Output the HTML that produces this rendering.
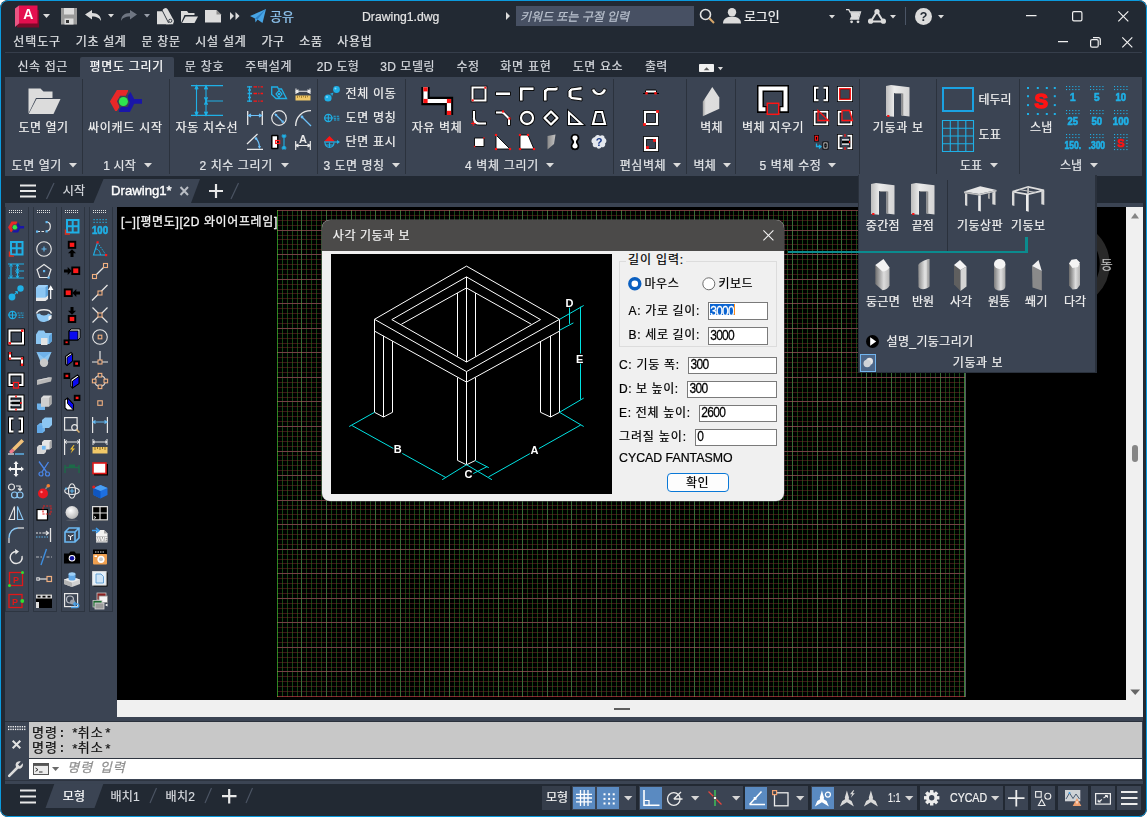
<!DOCTYPE html>
<html lang="ko">
<head>
<meta charset="utf-8">
<title>Drawing1.dwg</title>
<style>
*{box-sizing:border-box;margin:0;padding:0}
html,body{width:1147px;height:817px;overflow:hidden;background:#fff}
body{font-family:"Liberation Sans","Noto Sans CJK KR",sans-serif;font-size:12px;color:#e9e9e9;position:relative}
.abs{position:absolute}
#win{position:absolute;left:0;top:0;width:1147px;height:817px;background:#222933;border-radius:8px;overflow:hidden}
#frame{position:absolute;left:0;top:0;width:1147px;height:817px;border:1.5px solid #0b9ade;border-radius:8px;pointer-events:none}
.t{position:absolute;white-space:pre;line-height:16px;height:16px;color:#f0f0f0;-webkit-text-stroke:.22px currentColor}
svg{position:absolute;overflow:visible;fill:none}
</style>
</head>
<body>
<div id="win">
<!-- TITLE BAR -->
<svg style="left:14px;top:3.5px" width="26" height="24" viewBox="0 0 26 24"><path d="M3 19H25V23.500H3Z" fill="#7d0a2a"/><path d="M21 6H25V20H21Z" fill="#7d0a2a"/><path d="M5 1.500H23.500V19.500H5Z" fill="#e40f4f"/><path d="M1 4.500L5 1.500V19.500L1 23Z" fill="#ea5583"/><text x="14.300" y="15.300" font-size="14" font-weight="700" fill="#fff" text-anchor="middle" font-family="Liberation Sans,sans-serif">A</text></svg><svg style="left:43px;top:14px" width="7" height="4" viewBox="0 0 7 4"><path d="M0 0H7L3.500 4Z" fill="#dcdcdc"/></svg><svg style="left:61px;top:7.5px" width="16" height="17" viewBox="0 0 16 17"><path d="M0 0H16V16.500H0Z" fill="#9a9a9a"/><path d="M3 0H13V6.500H3Z" fill="#dcdcdc"/><path d="M3.500 10.500H12.500V16.500H3.500Z" fill="#dcdcdc"/><path d="M5 12H8V15H5Z" fill="#333"/></svg><svg style="left:85px;top:10px" width="17" height="11" viewBox="0 0 17 11"><path d="M0 4.500L7 0V3C13 3 16 6 16 11C14.500 8 12 6.500 7 6.500V9.500Z" fill="#dcdcdc"/></svg><svg style="left:108px;top:14px" width="6" height="3.5" viewBox="0 0 6 3.5"><path d="M0 0H6L3 3.500Z" fill="#dcdcdc"/></svg><svg style="left:121px;top:10px" width="17" height="11" viewBox="0 0 17 11"><path d="M16 4.500L9 0V3C3 3 0 6 0 11C1.500 8 4 6.500 9 6.500V9.500Z" fill="#6f7682"/></svg><svg style="left:144px;top:14px" width="6" height="3.5" viewBox="0 0 6 3.5"><path d="M0 0H6L3 3.500Z" fill="#9aa0aa"/></svg><svg style="left:157px;top:7.5px" width="17" height="17" viewBox="0 0 17 17"><path d="M0 3.200H6L12.500 16.300H0Z" fill="#dcdcdc"/><path d="M9 11.500H16.200V16.300H9Z" fill="#dcdcdc"/><path d="M8.500 3L14 13.200" stroke="#dcdcdc" stroke-width="5.600" stroke-linecap="round"/><path d="M5.300 2.600L11.600 15" stroke="#222933" stroke-width=".900"/><circle cx="13.300" cy="12.800" r="1.600" stroke="#222933" stroke-width=".900" fill="none"/></svg><svg style="left:181px;top:10px" width="17" height="13" viewBox="0 0 17 13"><path d="M0 13V1H6L7.500 3H13.500V5H3.500L0 13Z" fill="#dcdcdc"/><path d="M4.500 6.500H17L13.500 13H1Z" fill="#dcdcdc"/></svg><svg style="left:205px;top:10px" width="16" height="12.5" viewBox="0 0 16 12.5"><path d="M0 0H11.500L16 4.500V12.500H0Z" fill="#dcdcdc"/><path d="M11.500 0V4.500H16Z" fill="#8c8c8c"/></svg><svg style="left:229.5px;top:12px" width="10" height="8" viewBox="0 0 10 8"><path d="M0 0L4 4L0 8ZM5.500 0L9.500 4L5.500 8Z" fill="#dcdcdc"/></svg><svg style="left:249.5px;top:9px" width="16" height="14" viewBox="0 0 16 14"><path d="M0 7L16 0L12.500 14L7.500 10.500L5.500 13.500L5 9.500Z" fill="#47a5e6"/><path d="M5 9.500L16 0L7.500 10.500" fill="#2d7fc4"/></svg><svg style="left:699px;top:8px" width="16" height="16" viewBox="0 0 16 16"><circle cx="6.500" cy="6.500" r="5" stroke="#e4e4e4" stroke-width="1.600" fill="none"/><path d="M10.300 10.300L15 15" stroke="#d8a76a" stroke-width="2"/></svg><svg style="left:722.5px;top:8px" width="18" height="15.5" viewBox="0 0 18 15.5"><circle cx="9" cy="4.200" r="4.200" fill="#dcdcdc"/><path d="M0 15.500C0 10.500 4 8.800 9 8.800S18 10.500 18 15.500Z" fill="#dcdcdc"/></svg><svg style="left:829px;top:15px" width="6" height="3.5" viewBox="0 0 6 3.5"><path d="M0 0H6L3 3.500Z" fill="#dcdcdc"/></svg><svg style="left:846px;top:9px" width="15" height="14.5" viewBox="0 0 15 14.5"><path d="M0 .700H2.800L4 3H14.500L12.800 8.600H5.200L4.600 10H13.300" stroke="#dcdcdc" stroke-width="1.300" fill="none"/><path d="M4.200 3.300H14L12.500 8.300H5.400Z" fill="#dcdcdc"/><circle cx="5.600" cy="12.800" r="1.400" fill="#dcdcdc"/><circle cx="12" cy="12.800" r="1.400" fill="#dcdcdc"/></svg><svg style="left:867.5px;top:9px" width="18" height="15" viewBox="0 0 18 15"><path d="M9 2.500L2.800 12.500H15.200Z" stroke="#dcdcdc" stroke-width="2" fill="none"/><circle cx="9" cy="2.600" r="2.600" fill="#dcdcdc"/><circle cx="2.600" cy="12.200" r="2.600" fill="#dcdcdc"/><circle cx="15.400" cy="12.200" r="2.600" fill="#dcdcdc"/></svg><svg style="left:890px;top:15px" width="6" height="3.5" viewBox="0 0 6 3.5"><path d="M0 0H6L3 3.500Z" fill="#dcdcdc"/></svg><div class="abs" style="left:905px;top:7px;width:1px;height:18px;background:#4b5566;"></div><svg style="left:914.5px;top:8px" width="17" height="17" viewBox="0 0 17 17"><circle cx="8.500" cy="8.500" r="8.500" fill="#dcdcdc"/><text x="8.500" y="13" font-size="12.500" font-weight="700" fill="#222933" text-anchor="middle" font-family="Liberation Sans,sans-serif">?</text></svg><svg style="left:938px;top:15px" width="6" height="3.5" viewBox="0 0 6 3.5"><path d="M0 0H6L3 3.500Z" fill="#dcdcdc"/></svg><svg style="left:1026px;top:15px" width="11" height="2" viewBox="0 0 11 2"><path d="M0 .700H10.500" stroke="#f0f0f0" stroke-width="1.200"/></svg><svg style="left:1072px;top:11px" width="11" height="11" viewBox="0 0 11 11"><rect x=".600" y=".600" width="9.300" height="9.300" rx="1.300" stroke="#f0f0f0" stroke-width="1.200" fill="none"/></svg><svg style="left:1118px;top:11px" width="11" height="11" viewBox="0 0 11 11"><path d="M.300 .300L10.300 10.300M10.300 .300L.300 10.300" stroke="#f0f0f0" stroke-width="1.200"/></svg><svg style="left:1058px;top:41px" width="11" height="2" viewBox="0 0 11 2"><path d="M0 .600H10" stroke="#f0f0f0" stroke-width="1.200"/></svg><svg style="left:1089.5px;top:37px" width="11" height="11" viewBox="0 0 11 11"><rect x=".600" y="2.600" width="7.600" height="7.600" rx="1.500" stroke="#f0f0f0" stroke-width="1.200" fill="none"/><path d="M3 .600H8.500A1.800 1.800 0 0 1 10.300 2.400V8" stroke="#f0f0f0" stroke-width="1.200" fill="none"/></svg><svg style="left:1122px;top:37px" width="11" height="11" viewBox="0 0 11 11"><path d="M.300 .300L10.300 10.300M10.300 .300L.300 10.300" stroke="#f0f0f0" stroke-width="1.200"/></svg>
<span class="t" style="left:270.0px;top:8.6px;font-size:13px;color:#8fc5f0;letter-spacing:0.04px;">공유</span>
<span class="t" style="left:361.6px;top:8.6px;font-size:13.5px;color:#e4e4e4;transform:scaleX(0.905);transform-origin:0 50%;">Drawing1.dwg</span>
<svg style="left:506px;top:12px" width="4" height="8" viewBox="0 0 4 8"><path d="M0 0L4 4L0 8Z" fill="#dcdcdc"/></svg>
<div class="abs" style="left:516px;top:6px;width:178px;height:20px;background:#48516280;background:#475063"></div>
<span class="t" style="left:520.0px;top:8.6px;color:#b9c1cd;font-style:italic;letter-spacing:-0.03px;">키워드 또는 구절 입력</span>
<span class="t" style="left:744.0px;top:8.6px;font-size:13px;letter-spacing:-0.13px;">로그인</span>
<!-- MENU BAR -->
<span class="t" style="left:13.3px;top:34.0px;color:#dfe1e4;letter-spacing:0.88px;">선택도구</span>
<span class="t" style="left:75.7px;top:34.0px;color:#dfe1e4;letter-spacing:0.68px;">기초 설계</span>
<span class="t" style="left:141.6px;top:34.0px;color:#dfe1e4;letter-spacing:0.63px;">문 창문</span>
<span class="t" style="left:195.3px;top:34.0px;color:#dfe1e4;letter-spacing:0.76px;">시설 설계</span>
<span class="t" style="left:261.6px;top:34.0px;color:#dfe1e4;letter-spacing:0.25px;">가구</span>
<span class="t" style="left:299.2px;top:34.0px;color:#dfe1e4;letter-spacing:0.65px;">소품</span>
<span class="t" style="left:337.2px;top:34.0px;color:#dfe1e4;letter-spacing:0.69px;">사용법</span>
<div class="abs" style="left:5px;top:52px;width:1137px;height:1px;background:#363e4b;"></div>
<!-- RIBBON TABS -->
<div class="abs" style="left:80px;top:57px;width:94px;height:21px;background:#3b4453;border-radius:2px 2px 0 0"></div>
<span class="t" style="left:17.4px;top:58.6px;color:#d6d9de;letter-spacing:0.62px;">신속 접근</span>
<span class="t" style="left:89.6px;top:58.6px;color:#ffffff;letter-spacing:0.67px;">평면도 그리기</span>
<span class="t" style="left:184.8px;top:58.6px;color:#d6d9de;letter-spacing:0.73px;">문 창호</span>
<span class="t" style="left:245.2px;top:58.6px;color:#d6d9de;letter-spacing:0.71px;">주택설계</span>
<span class="t" style="left:316.7px;top:58.6px;color:#d6d9de;letter-spacing:0.35px;">2D 도형</span>
<span class="t" style="left:380.2px;top:58.6px;color:#d6d9de;letter-spacing:0.5px;">3D 모델링</span>
<span class="t" style="left:456.6px;top:58.6px;color:#d6d9de;letter-spacing:0.45px;">수정</span>
<span class="t" style="left:500.2px;top:58.6px;color:#d6d9de;letter-spacing:0.76px;">화면 표현</span>
<span class="t" style="left:572.7px;top:58.6px;color:#d6d9de;letter-spacing:0.62px;">도면 요소</span>
<span class="t" style="left:644.9px;top:58.6px;color:#d6d9de;letter-spacing:0.3px;">출력</span>
<svg style="left:699px;top:63.900px" width="24" height="8" viewBox="0 0 24 8"><rect x="0" y="0" width="15" height="8.100" rx=".800" fill="#f0f0f0"/><path d="M4.800 6.200L7.600 3.300L10.400 6.200Z" fill="#5a5a5a"/><path d="M18.900 3.100H24L21.450 6.300Z" fill="#dcdcdc"/></svg>
<!-- RIBBON -->
<div class="abs" style="left:5px;top:77px;width:1137.2px;height:98.7px;background:#3b4453;"></div>
<div class="abs" style="left:82px;top:79px;width:1px;height:95px;background:#2b323d;"></div>
<div class="abs" style="left:169px;top:79px;width:1px;height:95px;background:#2b323d;"></div>
<div class="abs" style="left:317px;top:79px;width:1px;height:95px;background:#2b323d;"></div>
<div class="abs" style="left:405px;top:79px;width:1px;height:95px;background:#2b323d;"></div>
<div class="abs" style="left:613px;top:79px;width:1px;height:95px;background:#2b323d;"></div>
<div class="abs" style="left:686px;top:79px;width:1px;height:95px;background:#2b323d;"></div>
<div class="abs" style="left:735px;top:79px;width:1px;height:95px;background:#2b323d;"></div>
<div class="abs" style="left:859px;top:79px;width:1px;height:95px;background:#2b323d;"></div>
<div class="abs" style="left:936px;top:79px;width:1px;height:95px;background:#2b323d;"></div>
<div class="abs" style="left:1019px;top:79px;width:1px;height:95px;background:#2b323d;"></div>
<svg style="left:27.5px;top:87.5px" width="33" height="27" viewBox="0 0 33 27"><path d="M.500 .500H12.500L15.500 3.500H24.500V10H8L.500 25.500Z" fill="#dcdcdc"/><path d="M8.500 11H32.500L25.500 26H.700Z" fill="#dcdcdc"/></svg><svg style="left:104px;top:84px" width="44" height="32" viewBox="0 0 44 32"><path d="M12.900 5.900H24.100V7.300L21.800 11.800H16.100L12.900 17.300L15.100 22V23.500L12.900 27H11.200L5.900 17.500Z" fill="#e82828"/><path d="M26.500 8L30.200 14.900H38V19.800H30.200L25.900 28H15.100V26.300L16.900 23.100H23.500L25.900 18.400L23.900 14.900V11.400Z" fill="#1a16a8"/><circle cx="19.400" cy="17.450" r="4.500" fill="#2ee64e"/></svg><svg style="left:191px;top:85px" width="32" height="31" viewBox="0 0 32 31"><path d="M0 .600H32M0 30.400H32M14.500 16H32M5.500 .600V30.400M15 .600V30.400" stroke="#1fb0e6" stroke-width="1.100"/><path d="M3.9 4.2L5.5 0.6L7.1 4.2M3.9 26.799999999999997L5.5 30.4L7.1 26.799999999999997M13.4 4.2L15 0.6L16.6 4.2M13.4 12.4L15 16L16.6 12.4M13.4 19.6L15 16L16.6 19.6M13.4 26.799999999999997L15 30.4L16.6 26.799999999999997" stroke="#1fb0e6" stroke-width="1.100" fill="#1fb0e6"/></svg><svg style="left:247px;top:86px" width="16" height="16" viewBox="0 0 16 16"><path d="M2.500 0V16M0 .800H5M0 15.200H5M.500 7.500H5M1 4H4M1 11.500H4" stroke="#1fb0e6" stroke-width="1.300"/><path d="M6.500 .800H16M6.500 7.500H16M6.500 15.200H16" stroke="#ff1414" stroke-width="1.300" stroke-dasharray="3.500 1.200 1.200 1.200"/></svg><svg style="left:271px;top:86px" width="16" height="16" viewBox="0 0 16 16"><path d="M.700 1H6.500L7.500 3H10.500L15.500 12.500H5L.700 8.500Z" stroke="#1fb0e6" stroke-width="1.300" fill="none"/><path d="M8 4.500L11 8L8 11.500L5 8Z" stroke="#1fb0e6" stroke-width="1.200" fill="none"/><rect x="7" y="7" width="2" height="2" fill="#1fb0e6"/></svg><svg style="left:295.3px;top:86px" width="16" height="16" viewBox="0 0 16 16"><path d="M1 2.500V8M15 2.500V8M1 5.200H15M3.500 3.800L1 5.200L3.500 6.600M12.500 3.800L15 5.200L12.500 6.600" stroke="#e8e8e8" stroke-width="1.100" fill="none"/><rect x=".500" y="9.500" width="15" height="5" fill="#f0c868"/><path d="M2.500 9.500V12M4.500 9.500V11.300M6.500 9.500V12M8.500 9.500V11.300M10.500 9.500V12M12.500 9.500V11.300" stroke="#8a6a20" stroke-width=".700"/></svg><svg style="left:247px;top:110px" width="16" height="16" viewBox="0 0 16 16"><path d="M.700 1V15M15.300 1V15" stroke="#e8e8e8" stroke-width="1.300"/><path d="M1.500 5.500H14.500M4 4L1.500 5.500L4 7M12 4L14.500 5.500L12 7" stroke="#6cc0f8" stroke-width="1.200" fill="#6cc0f8"/></svg><svg style="left:271px;top:110px" width="16" height="16" viewBox="0 0 16 16"><circle cx="8" cy="8" r="7.300" stroke="#e8e8e8" stroke-width="1.200" fill="none"/><path d="M4 4L12.500 12.500" stroke="#6cc0f8" stroke-width="1.200"/><path d="M3.500 3.500L6.500 4.300L4.300 6.500ZM13 13L10 12.200L12.200 10Z" fill="#6cc0f8"/></svg><svg style="left:295.3px;top:110px" width="16" height="16" viewBox="0 0 16 16"><path d="M.700 16C.700 7 7 .700 16 .700" stroke="#e8e8e8" stroke-width="1.300" fill="none"/><path d="M7 7L16 16" stroke="#6cc0f8" stroke-width="1.200"/><circle cx="7" cy="7" r="1.400" fill="#6cc0f8"/></svg><svg style="left:247px;top:134px" width="16" height="16" viewBox="0 0 16 16"><path d="M0 15.300H16M0 10L10.500 0" stroke="#e8e8e8" stroke-width="1.300"/><path d="M9 4.500C11.500 7 12.500 10 12.500 14" stroke="#6cc0f8" stroke-width="1.200" fill="none"/><circle cx="9" cy="4.500" r="1.300" fill="#6cc0f8"/><path d="M12.500 15L11 12H14Z" fill="#6cc0f8"/></svg><svg style="left:271px;top:134px" width="16" height="16" viewBox="0 0 16 16"><rect x=".800" y="1.500" width="6" height="13" rx=".500" fill="#fff" stroke="#000" stroke-width="1.500"/><rect x="4.700" y="6.500" width="4" height="3" stroke="#ff1414" stroke-width="1.200" fill="none"/><path d="M13 1V15M10.500 2H15.500M10.500 14H15.500M11.500 .500L14.500 3.500M14.500 .500L11.500 3.500M11.500 12.500L14.500 15.500M14.500 12.500L11.500 15.500" stroke="#1fb0e6" stroke-width="1.100"/></svg><svg style="left:295.3px;top:134px" width="16" height="16" viewBox="0 0 16 16"><path d="M.700 7V16M15.300 7V16M1 11.500H15M3.500 10L1 11.500L3.500 13M12.500 10L15 11.500L12.500 13" stroke="#e8e8e8" stroke-width="1.200" fill="none"/><text x="8" y="8.500" font-size="11" font-weight="700" fill="#e8e8e8" text-anchor="middle" font-family="Liberation Sans,sans-serif">A</text></svg><svg style="left:324px;top:85.5px" width="16" height="16" viewBox="0 0 16 16"><circle cx="4" cy="12" r="3.600" fill="#1fb0e6"/><circle cx="12.500" cy="3.500" r="3.400" fill="#1fb0e6"/><circle cx="3" cy="11" r="1" fill="#7fd8ff"/><circle cx="11.500" cy="2.500" r="1" fill="#7fd8ff"/><path d="M5.500 8L9.500 6.500L8 10.500L7.500 8.500Z" fill="#1fb0e6"/></svg><svg style="left:324px;top:109.5px" width="16" height="16" viewBox="0 0 16 16"><circle cx="4.300" cy="8" r="3.600" stroke="#1fb0e6" stroke-width="1.300" fill="none"/><path d="M0 8H9.500M4.300 4.400V11.600" stroke="#1fb0e6" stroke-width="1.100"/><path d="M9.500 6.300H16M10 8.200H16M10 10H16" stroke="#1fb0e6" stroke-width="1.100" stroke-dasharray="2.200 1"/></svg><svg style="left:324px;top:133.5px" width="16" height="16" viewBox="0 0 16 16"><path d="M5.500 2L11 7.500H0Z" fill="#ff1414"/><path d="M0 8H15" stroke="#1fb0e6" stroke-width="1.200"/><path d="M16 8L13 6V10Z" fill="#1fb0e6"/><path d="M1 8.500C1 15 10 15 10 8.500M5.500 8.500V13.500M2 11H9" stroke="#1fb0e6" stroke-width="1.200" fill="none"/></svg><svg style="left:421px;top:85px" width="32" height="32" viewBox="0 0 32 32"><path d="M4.500 2V16H28V30" stroke="#000" stroke-width="8.300" fill="none"/><path d="M4.500 2V16H28V30" stroke="#fff" stroke-width="4.200" fill="none"/><rect x="2.4" y="2.2" width="4.200" height="4.200" fill="#ff1414"/><rect x="2.4" y="13.9" width="4.200" height="4.200" fill="#ff1414"/><rect x="25.9" y="13.9" width="4.200" height="4.200" fill="#ff1414"/><rect x="25.9" y="25.8" width="4.200" height="4.200" fill="#ff1414"/></svg><svg style="left:471px;top:86px" width="16" height="16" viewBox="0 0 16 16"><rect x="1.500" y="1.500" width="13" height="13" stroke="#000" stroke-width="3.600" fill="none"/><rect x="1.500" y="1.500" width="13" height="13" stroke="#fff" stroke-width="2" fill="none"/><rect x="13.3" y="0.7" width="2" height="2" fill="#ff1414"/><rect x="0.7" y="13.3" width="2" height="2" fill="#ff1414"/></svg><svg style="left:495px;top:86px" width="16" height="16" viewBox="0 0 16 16"><path d="M.500 6H15.500V9.500H.500Z" fill="#fff" stroke="#000" stroke-width="0.9"/></svg><svg style="left:519px;top:86px" width="16" height="16" viewBox="0 0 16 16"><path d="M.500 1H15V4.500H4V15H.500Z" fill="#fff" stroke="#000" stroke-width="0.9"/></svg><svg style="left:543px;top:86px" width="16" height="16" viewBox="0 0 16 16"><path d="M.500 4L4.500 1.500H12.500L15 .500V4L13 5H5L4 5.700V15H.500Z" fill="#fff" stroke="#000" stroke-width="0.9"/></svg><svg style="left:567px;top:86px" width="16" height="16" viewBox="0 0 16 16"><path d="M15 .500V4L5 5V10.500L15 11.500V15L4 13.500L1 10.500V5L4 2Z" fill="#fff" stroke="#000" stroke-width="0.9"/></svg><svg style="left:591px;top:86px" width="16" height="16" viewBox="0 0 16 16"><path d="M.500 3.500L3.500 2.500C5 8 11 8 12.500 2.500L15.500 3.500C14 11.500 2 11.500 .500 3.500Z" fill="#fff" stroke="#000" stroke-width="0.9"/></svg><svg style="left:471px;top:110px" width="16" height="16" viewBox="0 0 16 16"><path d="M1.500 .500H4.500V8C4.500 10.500 6 12 8.500 12H15.500V15H8C4 15 1.500 12.500 1.500 8.500Z" fill="#fff" stroke="#000" stroke-width="0.9"/><path d="M0 13.500H4.500M2.200 11.300V15.800" stroke="#ff1414" stroke-width="1"/></svg><svg style="left:495px;top:110px" width="16" height="16" viewBox="0 0 16 16"><path d="M.500 1H8.500L15.500 8V15.500H12.500V9L7.500 4H.500Z" fill="#fff" stroke="#000" stroke-width="0.9"/><rect x="6.9" y="0.4" width="2.2" height="2.2" fill="#ff1414"/><rect x="13.4" y="7.4" width="2.2" height="2.2" fill="#ff1414"/></svg><svg style="left:519px;top:110px" width="16" height="16" viewBox="0 0 16 16"><circle cx="8" cy="8" r="6" stroke="#000" stroke-width="4" fill="none"/><circle cx="8" cy="8" r="6" stroke="#fff" stroke-width="2.300" fill="none"/></svg><svg style="left:543px;top:110px" width="16" height="16" viewBox="0 0 16 16"><path d="M8 1.500L14.500 8L8 14.500L1.500 8Z" stroke="#000" stroke-width="4" fill="none" stroke-linejoin="round"/><path d="M8 1.500L14.500 8L8 14.500L1.500 8Z" stroke="#fff" stroke-width="2.300" fill="none" stroke-linejoin="round"/></svg><svg style="left:567px;top:110px" width="16" height="16" viewBox="0 0 16 16"><path d="M2 2.500V14H14.500Z" stroke="#000" stroke-width="3.600" fill="none"/><path d="M2 2.500V14H14.500Z" stroke="#fff" stroke-width="2" fill="none"/></svg><svg style="left:591px;top:110px" width="16" height="16" viewBox="0 0 16 16"><path d="M5 2H11L14 14H2Z" stroke="#000" stroke-width="3.800" fill="none"/><path d="M5 2H11L14 14H2Z" stroke="#fff" stroke-width="2.200" fill="none"/></svg><svg style="left:471px;top:134px" width="16" height="16" viewBox="0 0 16 16"><path d="M3.500 4H13V12.500H3.500Z" fill="#fff" stroke="#000" stroke-width="0.9"/><rect x="12.1" y="3.3" width="1.4" height="1.4" fill="#ff1414"/><rect x="2.9" y="11.8" width="1.4" height="1.4" fill="#ff1414"/></svg><svg style="left:495px;top:134px" width="16" height="16" viewBox="0 0 16 16"><path d="M1 1L15 15H1Z" fill="#fff" stroke="#000" stroke-width="0.9"/><rect x="-0.1" y="-0.1" width="2.2" height="2.2" fill="#ff1414"/><rect x="-0.1" y="13.9" width="2.2" height="2.2" fill="#ff1414"/><rect x="13.9" y="13.9" width="2.2" height="2.2" fill="#ff1414"/></svg><svg style="left:519px;top:134px" width="16" height="16" viewBox="0 0 16 16"><path d="M1 1H9L15 15H1Z" fill="#fff" stroke="#000" stroke-width="0.9"/><rect x="-0.1" y="-0.1" width="2.2" height="2.2" fill="#ff1414"/><rect x="7.9" y="-0.1" width="2.2" height="2.2" fill="#ff1414"/><rect x="-0.1" y="13.9" width="2.2" height="2.2" fill="#ff1414"/><rect x="13.9" y="13.9" width="2.2" height="2.2" fill="#ff1414"/></svg><svg style="left:543px;top:134px" width="16" height="16" viewBox="0 0 16 16"><defs><linearGradient id="slab" x1="0" x2="1"><stop offset="0" stop-color="#8a8a8a"/><stop offset="1" stop-color="#c4c4c4"/></linearGradient></defs><path d="M4.500 2L12.500 .500L11 10L4.500 15.500Z" fill="url(#slab)"/></svg><svg style="left:567px;top:134px" width="16" height="16" viewBox="0 0 16 16"><path d="M8 .700C11.500 .700 12.500 4 10.500 6.500C9.500 7.500 9.500 8.500 10.500 9.500C12.500 12 11.500 15.300 8 15.300C4.500 15.300 3.500 12 5.500 9.500C6.500 8.500 6.500 7.500 5.500 6.500C3.500 4 4.500 .700 8 .700Z" fill="#fff" stroke="#000" stroke-width="1.800"/></svg><svg style="left:591px;top:134px" width="16" height="16" viewBox="0 0 16 16"><path d="M4 3C5 .500 8 .500 9 2C11 .500 14 1.500 13.500 4C16 5 16 8.500 14 9.500C15 12 12.500 14 10.500 13C9 15.500 6 15 5.500 13C2.500 14 1 11.500 2 9.500C-.500 8.500 0 4 4 3Z" fill="#e4e8ee"/><text x="8" y="12" font-size="11" font-weight="700" fill="#1a3a8a" text-anchor="middle" font-family="Liberation Sans,sans-serif">?</text></svg><svg style="left:643px;top:85px" width="16" height="16" viewBox="0 0 16 16"><path d="M0 8.500H16" stroke="#000" stroke-width="1"/><rect x="2.500" y="5" width="11" height="3" rx="1" fill="#fff" stroke="#000" stroke-width="1"/><rect x="2.3" y="7.1" width="2.4" height="2.4" fill="#ff1414"/><rect x="11.3" y="7.1" width="2.4" height="2.4" fill="#ff1414"/></svg><svg style="left:643px;top:109.5px" width="16" height="16" viewBox="0 0 16 16"><rect x="2" y="2" width="12" height="12" stroke="#000" stroke-width="3.800" fill="none"/><rect x="2" y="2" width="12" height="12" stroke="#fff" stroke-width="2.200" fill="none"/><rect x="13.1" y="0.1" width="2.8" height="2.8" fill="#ff1414"/><rect x="0.1" y="13.1" width="2.8" height="2.8" fill="#ff1414"/></svg><svg style="left:643px;top:135.5px" width="16" height="16" viewBox="0 0 16 16"><rect x="2" y="2" width="12" height="12" stroke="#000" stroke-width="3.800" fill="none"/><rect x="2" y="2" width="12" height="12" stroke="#fff" stroke-width="2.200" fill="none"/><rect x="10.1" y="3.1" width="2.8" height="2.8" fill="#ff1414"/><rect x="3.1" y="10.1" width="2.8" height="2.8" fill="#ff1414"/></svg><svg style="left:701.5px;top:86.5px" width="18" height="30" viewBox="0 0 18 30"><defs><linearGradient id="wl" x1="0" x2="1"><stop offset="0" stop-color="#a0a0a0"/><stop offset=".18" stop-color="#dedede"/><stop offset="1" stop-color="#dcdcdc"/></linearGradient></defs><path d="M10.300 0L17.300 10.500V21.800L.800 29.200V14.800Z" fill="url(#wl)"/></svg><svg style="left:757px;top:85px" width="32" height="30" viewBox="0 0 32 30"><path d="M8 24.500H3.500V3.500H28.500V24.500H24" stroke="#000" stroke-width="7" fill="none" stroke-linecap="square"/><path d="M8.500 24.200H3.500V3.500H28.500V24.200H23.500" stroke="#fff" stroke-width="4" fill="none"/><rect x="10.300" y="18.300" width="11.400" height="11" stroke="#ff1414" stroke-width="1.500" fill="#3b4453"/></svg><svg style="left:813px;top:86px" width="16" height="16" viewBox="0 0 16 16"><path d="M5.500 1.700H2V14.300H5.500M10.500 1.700H14V14.300H10.500" stroke="#000" stroke-width="3.8" fill="none"/><path d="M5.500 1.700H2V14.300H5.500M10.500 1.700H14V14.300H10.500" stroke="#fff" stroke-width="2" fill="none"/></svg><svg style="left:837.2px;top:86px" width="16" height="16" viewBox="0 0 16 16"><rect x="1.700" y="1.700" width="12.600" height="12.600" stroke="#000" stroke-width="3.400" fill="none"/><rect x="1.700" y="1.700" width="12.600" height="12.600" stroke="#fff" stroke-width="1.800" fill="none"/><rect x="2.700" y="2.700" width="10.600" height="10.600" stroke="#ff1414" stroke-width="1.300" fill="none"/></svg><svg style="left:813px;top:110px" width="16" height="16" viewBox="0 0 16 16"><rect x="1.700" y="1.700" width="12.600" height="12.600" stroke="#000" stroke-width="3.400" fill="none"/><rect x="1.700" y="1.700" width="12.600" height="12.600" stroke="#fff" stroke-width="1.800" fill="none"/><path d="M5 .500L15.500 10.500H5Z" stroke="#ff1414" stroke-width="1.300" fill="#3b4453"/></svg><svg style="left:837.2px;top:110px" width="16" height="16" viewBox="0 0 16 16"><rect x="1.700" y="1.700" width="12.600" height="12.600" stroke="#000" stroke-width="3.400" fill="none"/><rect x="1.700" y="1.700" width="12.600" height="12.600" stroke="#fff" stroke-width="1.800" fill="none"/><path d="M5 .500H12.500L15.500 10.500H5Z" stroke="#ff1414" stroke-width="1.300" fill="#3b4453"/></svg><svg style="left:813px;top:134px" width="16" height="16" viewBox="0 0 16 16"><rect x="1" y="1" width="5" height="6.500" fill="#000"/><rect x="2.300" y="2.300" width="2.400" height="3.900" stroke="#ff1414" stroke-width="1.200" fill="none"/><rect x="10" y="8" width="5" height="7" fill="#fff" stroke="#000" stroke-width="1"/><rect x="11.700" y="9.700" width="1.600" height="3.600" stroke="#000" stroke-width=".800" fill="#3b4453"/><path d="M3.500 9.500V12.500H7.500M6 11L8 12.500L6 14.500" stroke="#1fb0e6" stroke-width="1.300" fill="none"/></svg><svg style="left:837.2px;top:134px" width="16" height="16" viewBox="0 0 16 16"><rect x="1.700" y="1.700" width="12.600" height="12.600" stroke="#000" stroke-width="3.400" fill="none"/><rect x="1.700" y="1.700" width="12.600" height="12.600" stroke="#fff" stroke-width="1.800" fill="none"/><rect x="5.500" y="0" width="5" height="16" fill="#3b4453"/><path d="M5 6H12M5 10H12" stroke="#fff" stroke-width="1.500"/><rect x="5" y="6.700" width="7" height="2.600" fill="#000"/><path d="M8 0V3M8 13V16M12.500 7V9" stroke="#ff1414" stroke-width="1.200"/></svg><svg style="left:885.7px;top:85px" width="24" height="32" viewBox="0 0 24 32"><defs><linearGradient id="pgb" x1="0" x2="1" y1="0" y2="0"><stop offset="0" stop-color="#bdbdbd"/><stop offset=".35" stop-color="#ececec"/><stop offset="1" stop-color="#d4d4d4"/></linearGradient></defs><path d="M0 1L5 0L23.500 2.200V31.500L15.500 30.500V8H8V31.800L0 31Z" fill="url(#pgb)"/><path d="M15.500 8L17.300 8.800V30.700L15.500 30.500Z" fill="#8f8f8f"/><path d="M8 8H15.500L17.300 8.800H9.500Z" fill="#a8a8a8"/><rect x="1.200" y="30" width="2.200" height="2" fill="#ff1010"/></svg><div class="abs" style="left:942px;top:86.500px;width:32px;height:25px;border:2px solid #1ba2e2"></div><svg style="left:942px;top:120px" width="32" height="32" viewBox="0 0 32 32"><path d="M.500 .500H31.500V31.500H.500ZM8.300 .500V31.500M16 .500V31.500M23.800 .500V31.500M.500 8.300H31.500M.500 16H31.500M.500 23.800H31.500" stroke="#1fb0e6" stroke-width="1.100" fill="none"/></svg><svg style="left:1027.2px;top:86.8px" width="29" height="28" viewBox="0 0 29 28"><g fill="#1fb0e6"><rect x="0" y="0" width="2" height="2"/><rect x="9.8" y="0" width="2" height="2"/><rect x="18.8" y="0" width="2" height="2"/><rect x="26.8" y="0" width="2" height="2"/><rect x="0" y="8.2" width="2" height="2"/><rect x="26.8" y="8.2" width="2" height="2"/><rect x="0" y="17.1" width="2" height="2"/><rect x="26.8" y="17.1" width="2" height="2"/><rect x="0" y="26" width="2" height="2"/><rect x="9.8" y="26" width="2" height="2"/><rect x="18.8" y="26" width="2" height="2"/><rect x="26.8" y="26" width="2" height="2"/></g><text x="14.200" y="21.300" font-size="21" font-weight="700" fill="#ff1414" stroke="#ff1414" stroke-width="1.500" text-anchor="middle" font-family="Liberation Sans,sans-serif" textLength="13.500" lengthAdjust="spacingAndGlyphs">S</text></svg><svg style="left:1065.5px;top:86.4px" width="14" height="16" viewBox="0 0 14 16"><g fill="#1fb0e6"><rect x="0.0" y="0" width="1.100" height="1.100"/><rect x="0.0" y="3" width="1.100" height="1.100"/><rect x="3.1" y="0" width="1.100" height="1.100"/><rect x="3.1" y="3" width="1.100" height="1.100"/><rect x="6.2" y="0" width="1.100" height="1.100"/><rect x="6.2" y="3" width="1.100" height="1.100"/><rect x="9.3" y="0" width="1.100" height="1.100"/><rect x="9.3" y="3" width="1.100" height="1.100"/><rect x="12.4" y="0" width="1.100" height="1.100"/><rect x="12.4" y="3" width="1.100" height="1.100"/></g><text x="6.800" y="15" font-size="10" font-weight="700" fill="#1fb0e6" stroke="#1fb0e6" stroke-width=".600" text-anchor="middle" font-family="Liberation Sans,sans-serif">1</text></svg><svg style="left:1089.9px;top:86.4px" width="14" height="16" viewBox="0 0 14 16"><g fill="#1fb0e6"><rect x="0.0" y="0" width="1.100" height="1.100"/><rect x="0.0" y="3" width="1.100" height="1.100"/><rect x="3.1" y="0" width="1.100" height="1.100"/><rect x="3.1" y="3" width="1.100" height="1.100"/><rect x="6.2" y="0" width="1.100" height="1.100"/><rect x="6.2" y="3" width="1.100" height="1.100"/><rect x="9.3" y="0" width="1.100" height="1.100"/><rect x="9.3" y="3" width="1.100" height="1.100"/><rect x="12.4" y="0" width="1.100" height="1.100"/><rect x="12.4" y="3" width="1.100" height="1.100"/></g><text x="6.800" y="15" font-size="10" font-weight="700" fill="#1fb0e6" stroke="#1fb0e6" stroke-width=".600" text-anchor="middle" font-family="Liberation Sans,sans-serif">5</text></svg><svg style="left:1113.8px;top:86.4px" width="14" height="16" viewBox="0 0 14 16"><g fill="#1fb0e6"><rect x="0.0" y="0" width="1.100" height="1.100"/><rect x="0.0" y="3" width="1.100" height="1.100"/><rect x="3.1" y="0" width="1.100" height="1.100"/><rect x="3.1" y="3" width="1.100" height="1.100"/><rect x="6.2" y="0" width="1.100" height="1.100"/><rect x="6.2" y="3" width="1.100" height="1.100"/><rect x="9.3" y="0" width="1.100" height="1.100"/><rect x="9.3" y="3" width="1.100" height="1.100"/><rect x="12.4" y="0" width="1.100" height="1.100"/><rect x="12.4" y="3" width="1.100" height="1.100"/></g><text x="6.800" y="15" font-size="10" font-weight="700" fill="#1fb0e6" stroke="#1fb0e6" stroke-width=".600" text-anchor="middle" font-family="Liberation Sans,sans-serif" textLength="10.500" lengthAdjust="spacingAndGlyphs">10</text></svg><svg style="left:1065.5px;top:110.4px" width="14" height="16" viewBox="0 0 14 16"><g fill="#1fb0e6"><rect x="0.0" y="0" width="1.100" height="1.100"/><rect x="0.0" y="3" width="1.100" height="1.100"/><rect x="3.1" y="0" width="1.100" height="1.100"/><rect x="3.1" y="3" width="1.100" height="1.100"/><rect x="6.2" y="0" width="1.100" height="1.100"/><rect x="6.2" y="3" width="1.100" height="1.100"/><rect x="9.3" y="0" width="1.100" height="1.100"/><rect x="9.3" y="3" width="1.100" height="1.100"/><rect x="12.4" y="0" width="1.100" height="1.100"/><rect x="12.4" y="3" width="1.100" height="1.100"/></g><text x="6.800" y="15" font-size="10" font-weight="700" fill="#1fb0e6" stroke="#1fb0e6" stroke-width=".600" text-anchor="middle" font-family="Liberation Sans,sans-serif" textLength="10.500" lengthAdjust="spacingAndGlyphs">25</text></svg><svg style="left:1089.9px;top:110.4px" width="14" height="16" viewBox="0 0 14 16"><g fill="#1fb0e6"><rect x="0.0" y="0" width="1.100" height="1.100"/><rect x="0.0" y="3" width="1.100" height="1.100"/><rect x="3.1" y="0" width="1.100" height="1.100"/><rect x="3.1" y="3" width="1.100" height="1.100"/><rect x="6.2" y="0" width="1.100" height="1.100"/><rect x="6.2" y="3" width="1.100" height="1.100"/><rect x="9.3" y="0" width="1.100" height="1.100"/><rect x="9.3" y="3" width="1.100" height="1.100"/><rect x="12.4" y="0" width="1.100" height="1.100"/><rect x="12.4" y="3" width="1.100" height="1.100"/></g><text x="6.800" y="15" font-size="10" font-weight="700" fill="#1fb0e6" stroke="#1fb0e6" stroke-width=".600" text-anchor="middle" font-family="Liberation Sans,sans-serif" textLength="10.500" lengthAdjust="spacingAndGlyphs">50</text></svg><svg style="left:1113.8px;top:110.4px" width="14" height="16" viewBox="0 0 14 16"><g fill="#1fb0e6"><rect x="0.0" y="0" width="1.100" height="1.100"/><rect x="0.0" y="3" width="1.100" height="1.100"/><rect x="3.1" y="0" width="1.100" height="1.100"/><rect x="3.1" y="3" width="1.100" height="1.100"/><rect x="6.2" y="0" width="1.100" height="1.100"/><rect x="6.2" y="3" width="1.100" height="1.100"/><rect x="9.3" y="0" width="1.100" height="1.100"/><rect x="9.3" y="3" width="1.100" height="1.100"/><rect x="12.4" y="0" width="1.100" height="1.100"/><rect x="12.4" y="3" width="1.100" height="1.100"/></g><text x="6.800" y="15" font-size="10" font-weight="700" fill="#1fb0e6" stroke="#1fb0e6" stroke-width=".600" text-anchor="middle" font-family="Liberation Sans,sans-serif" textLength="16" lengthAdjust="spacingAndGlyphs">100</text></svg><svg style="left:1065.5px;top:134.4px" width="14" height="16" viewBox="0 0 14 16"><g fill="#1fb0e6"><rect x="0.0" y="0" width="1.100" height="1.100"/><rect x="0.0" y="3" width="1.100" height="1.100"/><rect x="3.1" y="0" width="1.100" height="1.100"/><rect x="3.1" y="3" width="1.100" height="1.100"/><rect x="6.2" y="0" width="1.100" height="1.100"/><rect x="6.2" y="3" width="1.100" height="1.100"/><rect x="9.3" y="0" width="1.100" height="1.100"/><rect x="9.3" y="3" width="1.100" height="1.100"/><rect x="12.4" y="0" width="1.100" height="1.100"/><rect x="12.4" y="3" width="1.100" height="1.100"/></g><text x="6.800" y="15" font-size="10" font-weight="700" fill="#1fb0e6" stroke="#1fb0e6" stroke-width=".600" text-anchor="middle" font-family="Liberation Sans,sans-serif" textLength="16.500" lengthAdjust="spacingAndGlyphs">150.</text></svg><svg style="left:1089.9px;top:134.4px" width="14" height="16" viewBox="0 0 14 16"><g fill="#1fb0e6"><rect x="0.0" y="0" width="1.100" height="1.100"/><rect x="0.0" y="3" width="1.100" height="1.100"/><rect x="3.1" y="0" width="1.100" height="1.100"/><rect x="3.1" y="3" width="1.100" height="1.100"/><rect x="6.2" y="0" width="1.100" height="1.100"/><rect x="6.2" y="3" width="1.100" height="1.100"/><rect x="9.3" y="0" width="1.100" height="1.100"/><rect x="9.3" y="3" width="1.100" height="1.100"/><rect x="12.4" y="0" width="1.100" height="1.100"/><rect x="12.4" y="3" width="1.100" height="1.100"/></g><text x="6.800" y="15" font-size="10" font-weight="700" fill="#1fb0e6" stroke="#1fb0e6" stroke-width=".600" text-anchor="middle" font-family="Liberation Sans,sans-serif" textLength="16.500" lengthAdjust="spacingAndGlyphs">.300</text></svg><svg style="left:1113.8px;top:134.4px" width="14" height="16" viewBox="0 0 14 16"><g fill="#1fb0e6"><rect x="0.0" y="0" width="1.100" height="1.100"/><rect x="0.0" y="3" width="1.100" height="1.100"/><rect x="0.0" y="6" width="1.100" height="1.100"/><rect x="0.0" y="9" width="1.100" height="1.100"/><rect x="0.0" y="12" width="1.100" height="1.100"/><rect x="0.0" y="15" width="1.100" height="1.100"/><rect x="3.1" y="0" width="1.100" height="1.100"/><rect x="3.1" y="3" width="1.100" height="1.100"/><rect x="3.1" y="15" width="1.100" height="1.100"/><rect x="6.2" y="0" width="1.100" height="1.100"/><rect x="6.2" y="3" width="1.100" height="1.100"/><rect x="6.2" y="15" width="1.100" height="1.100"/><rect x="9.3" y="0" width="1.100" height="1.100"/><rect x="9.3" y="3" width="1.100" height="1.100"/><rect x="9.3" y="15" width="1.100" height="1.100"/><rect x="12.4" y="0" width="1.100" height="1.100"/><rect x="12.4" y="3" width="1.100" height="1.100"/><rect x="12.4" y="6" width="1.100" height="1.100"/><rect x="12.4" y="9" width="1.100" height="1.100"/><rect x="12.4" y="12" width="1.100" height="1.100"/><rect x="12.4" y="15" width="1.100" height="1.100"/></g><text x="6.800" y="13" font-size="11" font-weight="700" fill="#ff1414" stroke="#ff1414" stroke-width=".600" text-anchor="middle" font-family="Liberation Sans,sans-serif">S</text></svg>
<span class="t" style="left:18.4px;top:119.9px;letter-spacing:0.54px;">도면 열기</span>
<span class="t" style="left:87.9px;top:119.9px;letter-spacing:0.76px;">싸이캐드 시작</span>
<span class="t" style="left:175.5px;top:119.9px;letter-spacing:0.69px;">자동 치수선</span>
<span class="t" style="left:411.7px;top:119.9px;letter-spacing:0.64px;">자유 벽체</span>
<span class="t" style="left:700.2px;top:119.9px;letter-spacing:0.3px;">벽체</span>
<span class="t" style="left:742.0px;top:119.9px;letter-spacing:0.58px;">벽체 지우기</span>
<span class="t" style="left:872.8px;top:119.9px;letter-spacing:0.68px;">기둥과 보</span>
<span class="t" style="left:1030.0px;top:119.9px;letter-spacing:0.1px;">스냅</span>
<span class="t" style="left:345.6px;top:86.1px;letter-spacing:0.7px;">전체 이동</span>
<span class="t" style="left:345.6px;top:110.1px;letter-spacing:0.7px;">도면 명칭</span>
<span class="t" style="left:345.6px;top:134.2px;letter-spacing:0.7px;">단면 표시</span>
<span class="t" style="left:978.5px;top:91.6px;">테두리</span>
<span class="t" style="left:978.5px;top:127.1px;letter-spacing:0.1px;">도표</span>
<span class="t" style="left:11.5px;top:157.6px;color:#e3e5e8;letter-spacing:0.6px;">도면 열기</span>
<svg style="left:69.3px;top:163px" width="8" height="4.5" viewBox="0 0 8 4.5"><path d="M0 0H8L4.0 4.5Z" fill="#dcdcdc"/></svg>
<span class="t" style="left:103.2px;top:157.6px;color:#e3e5e8;letter-spacing:0.18px;">1 시작</span>
<svg style="left:143.5px;top:163px" width="8" height="4.5" viewBox="0 0 8 4.5"><path d="M0 0H8L4.0 4.5Z" fill="#dcdcdc"/></svg>
<span class="t" style="left:199.5px;top:157.6px;color:#e3e5e8;letter-spacing:0.59px;">2 치수 그리기</span>
<svg style="left:280.5px;top:163px" width="8" height="4.5" viewBox="0 0 8 4.5"><path d="M0 0H8L4.0 4.5Z" fill="#dcdcdc"/></svg>
<span class="t" style="left:323.4px;top:157.6px;color:#e3e5e8;letter-spacing:0.54px;">3 도면 명칭</span>
<svg style="left:392px;top:163px" width="8" height="4.5" viewBox="0 0 8 4.5"><path d="M0 0H8L4.0 4.5Z" fill="#dcdcdc"/></svg>
<span class="t" style="left:465.0px;top:157.6px;color:#e3e5e8;letter-spacing:0.68px;">4 벽체 그리기</span>
<svg style="left:546.3px;top:163px" width="8" height="4.5" viewBox="0 0 8 4.5"><path d="M0 0H8L4.0 4.5Z" fill="#dcdcdc"/></svg>
<span class="t" style="left:619.7px;top:157.6px;color:#e3e5e8;letter-spacing:0.58px;">편심벽체</span>
<svg style="left:673.2px;top:163px" width="8" height="4.5" viewBox="0 0 8 4.5"><path d="M0 0H8L4.0 4.5Z" fill="#dcdcdc"/></svg>
<span class="t" style="left:693.4px;top:157.6px;color:#e3e5e8;letter-spacing:0.25px;">벽체</span>
<svg style="left:722.6px;top:163px" width="8" height="4.5" viewBox="0 0 8 4.5"><path d="M0 0H8L4.0 4.5Z" fill="#dcdcdc"/></svg>
<span class="t" style="left:759.6px;top:157.6px;color:#e3e5e8;letter-spacing:0.63px;">5 벽체 수정</span>
<svg style="left:828px;top:163px" width="8" height="4.5" viewBox="0 0 8 4.5"><path d="M0 0H8L4.0 4.5Z" fill="#dcdcdc"/></svg>
<span class="t" style="left:959.9px;top:157.6px;color:#e3e5e8;letter-spacing:0.15px;">도표</span>
<svg style="left:989.7px;top:163px" width="8" height="4.5" viewBox="0 0 8 4.5"><path d="M0 0H8L4.0 4.5Z" fill="#dcdcdc"/></svg>
<span class="t" style="left:1060.0px;top:157.6px;color:#e3e5e8;letter-spacing:-0.05px;">스냅</span>
<svg style="left:1090px;top:163px" width="8" height="4.5" viewBox="0 0 8 4.5"><path d="M0 0H8L4.0 4.5Z" fill="#dcdcdc"/></svg>
<!-- FILE TABS -->
<svg style="left:0;top:179px" width="260" height="24" viewBox="0 0 260 24"><path d="M93.5 24L103.5 0H200L191 24Z" fill="#3b4453"/><g stroke="#4a5362" stroke-width="1.2"><path d="M46.5 20L54 4"/><path d="M231 20L238.500 4"/></g><g stroke="#e8e8e8" stroke-width="2"><path d="M20 6.500H36M20 12H36M20 17.500H36"/><path d="M216 5V19M209 12H223" stroke-width="2.2"/></g><path d="M180.500 8L188 16M188 8L180.500 16" stroke="#b9bdc4" stroke-width="2"/></svg>
<span class="t" style="left:62.7px;top:182.8px;color:#d6d9de;letter-spacing:0.35px;">시작</span>
<span class="t" style="left:110.7px;top:182.8px;font-size:13.5px;color:#ffffff;transform:scaleX(0.975);transform-origin:0 50%;-webkit-text-stroke:.4px #fff;">Drawing1*</span>
<!-- LEFT TOOLBARS -->
<div class="abs" style="left:5px;top:203px;width:1138px;height:4px;background:#3b4453;"></div>
<div class="abs" style="left:5px;top:207px;width:112px;height:515px;background:#3b4453;"></div>
<div class="abs" style="left:4.5px;top:207px;width:24px;height:404.500px;border:1px solid #2d3541;border-top:0;background:#3b4453"></div><svg style="left:8.5px;top:210.3px" width="14" height="3" viewBox="0 0 14 3"><g fill="#e0e0e0"><rect x="0.0" y="0.0" width="1" height="1"/><rect x="0.0" y="2.0" width="1" height="1"/><rect x="2.0" y="0.0" width="1" height="1"/><rect x="2.0" y="2.0" width="1" height="1"/><rect x="4.0" y="0.0" width="1" height="1"/><rect x="4.0" y="2.0" width="1" height="1"/><rect x="6.0" y="0.0" width="1" height="1"/><rect x="6.0" y="2.0" width="1" height="1"/><rect x="8.0" y="0.0" width="1" height="1"/><rect x="8.0" y="2.0" width="1" height="1"/><rect x="10.0" y="0.0" width="1" height="1"/><rect x="10.0" y="2.0" width="1" height="1"/><rect x="12.0" y="0.0" width="1" height="1"/><rect x="12.0" y="2.0" width="1" height="1"/></g></svg><svg style="left:8.3px;top:219px" width="16" height="16" viewBox="0 0 16 16"><g transform="translate(-2.900 -.400) scale(.500)"><path d="M12.900 5.900H24.100V7.300L21.800 11.800H16.100L12.900 17.300L15.100 22V23.500L12.900 27H11.200L5.900 17.500Z" fill="#e82828"/><path d="M26.500 8L30.200 14.900H38V19.800H30.200L25.900 28H15.100V26.300L16.900 23.100H23.500L25.900 18.400L23.900 14.900V11.400Z" fill="#1a16a8"/><circle cx="19.400" cy="17.450" r="4.500" fill="#2ee64e"/></g></svg><svg style="left:8.3px;top:241px" width="16" height="16" viewBox="0 0 16 16"><path d="M3 1H14.500V13.500H3ZM8.700 1V13.500M3 7.200H14.500" stroke="#1fb0e6" stroke-width="2" fill="none"/><path d="M1.500 10.500V15H6" stroke="#e03020" stroke-width="1.400" fill="none"/></svg><svg style="left:8.3px;top:263px" width="16" height="16" viewBox="0 0 16 16"><path d="M0 1H16M0 15H16M7 8H16M3 1V15M9.500 1V15" stroke="#1fb0e6" stroke-width="1.200"/><path d="M1.500 3.500L3 1L4.500 3.500M1.500 12.500L3 15L4.500 12.500M8 3.500L9.500 1L11 3.500M8 5.500L9.500 8L11 5.500M8 10.500L9.500 8L11 10.500M8 12.500L9.500 15L11 12.500" stroke="#1fb0e6" stroke-width="1" fill="none"/></svg><svg style="left:8.3px;top:285px" width="16" height="16" viewBox="0 0 16 16"><circle cx="4" cy="12" r="3.400" fill="#1fb0e6"/><circle cx="12.500" cy="3.500" r="3.200" fill="#1fb0e6"/><path d="M6.500 9.500L9.500 6.500M9.500 6.500H7.300M9.500 6.500V8.700" stroke="#1fb0e6" stroke-width="1.100"/></svg><svg style="left:8.3px;top:307px" width="16" height="16" viewBox="0 0 16 16"><circle cx="4.500" cy="8" r="3.600" stroke="#1fb0e6" stroke-width="1.200" fill="none"/><path d="M0 8H9M4.500 4.400V11.600" stroke="#1fb0e6" stroke-width="1.100"/><path d="M9.500 6H16M10.500 8.200H16M10.500 10.400H16" stroke="#1fb0e6" stroke-width=".900" stroke-dasharray="2 1"/></svg><svg style="left:8.3px;top:329px" width="16" height="16" viewBox="0 0 16 16"><rect x="1.500" y="1.500" width="13.500" height="13" fill="none" stroke="#000" stroke-width="4"/><rect x="1.500" y="1.500" width="13.500" height="13" fill="none" stroke="#fff" stroke-width="2"/><rect x="13" y=".500" width="2.500" height="2.500" fill="#ff1a1a"/><rect x=".500" y="13" width="2.500" height="2.500" fill="#ff1a1a"/></svg><svg style="left:8.3px;top:351px" width="16" height="16" viewBox="0 0 16 16"><path d="M2 1V7.500H14V15" stroke="#000" stroke-width="4.200" fill="none"/><path d="M2 1.200V7.500H14V14.800" stroke="#fff" stroke-width="2.200" fill="none"/><rect x=".900" y="1" width="2.200" height="2.500" fill="#ff1a1a"/><rect x="12.900" y="12.500" width="2.200" height="2.500" fill="#ff1a1a"/><rect x=".900" y="6.400" width="2.200" height="2.200" fill="#ff1a1a"/><rect x="12.900" y="6.400" width="2.200" height="2.200" fill="#ff1a1a"/></svg><svg style="left:8.3px;top:373px" width="16" height="16" viewBox="0 0 16 16"><path d="M5.500 12H1.500V1.500H14.500V12H10.500" stroke="#000" stroke-width="4" fill="none"/><path d="M5.500 12H1.500V1.500H14.500V12H10.500" stroke="#fff" stroke-width="2" fill="none"/><rect x="5.500" y="9.500" width="5" height="5.500" stroke="#ff1a1a" stroke-width="1.300" fill="none"/></svg><svg style="left:8.3px;top:395px" width="16" height="16" viewBox="0 0 16 16"><rect x="1.500" y="1.500" width="13" height="13" stroke="#000" stroke-width="4" fill="none"/><rect x="1.500" y="1.500" width="13" height="13" stroke="#fff" stroke-width="2" fill="none"/><path d="M2 6H12M2 10H12" stroke="#fff" stroke-width="1.600"/><rect x="4" y="6.800" width="8" height="2.400" fill="#000"/><rect x="7.200" y=".500" width="1.600" height="2" fill="#ff1a1a"/><rect x="7.200" y="13.500" width="1.600" height="2" fill="#ff1a1a"/><rect x="12.200" y="7" width="1.500" height="2" fill="#ff1a1a"/></svg><svg style="left:8.3px;top:417px" width="16" height="16" viewBox="0 0 16 16"><path d="M5.500 1.500H2V14.500H5.500M10.500 1.500H14V14.500H10.500" stroke="#000" stroke-width="4" fill="none"/><path d="M5.500 1.500H2V14.500H5.500M10.500 1.500H14V14.500H10.500" stroke="#fff" stroke-width="2" fill="none"/></svg><svg style="left:8.3px;top:439px" width="16" height="16" viewBox="0 0 16 16"><path d="M0 15H6" stroke="#f0f0f0" stroke-width="1.200"/><path d="M7 15H16" stroke="#62b8f0" stroke-width="1.400"/><path d="M13.500 0L16 2.500L6.500 12L4 9.500Z" fill="#f2c27a"/><path d="M4 9.500L6.500 12L5 13.500C4 14.500 2 14.500 1.500 13.500C1 12.500 1.500 11.500 2.500 11Z" fill="#f07a8a"/></svg><svg style="left:8.3px;top:461px" width="16" height="16" viewBox="0 0 16 16"><path d="M8 0L10.500 3H9V7H13V5.500L16 8L13 10.500V9H9V13H10.500L8 16L5.500 13H7V9H3V10.500L0 8L3 5.500V7H7V3H5.500Z" fill="#f4f4f4"/></svg><svg style="left:8.3px;top:483px" width="16" height="16" viewBox="0 0 16 16"><circle cx="3.500" cy="4" r="3" stroke="#e6e6e6" stroke-width="1.200" fill="none"/><path d="M8 3H12V7M10 5.500L12 7.500L14 5.500" stroke="#e6e6e6" stroke-width="1.200" fill="none"/><circle cx="6.500" cy="12" r="3" stroke="#8cc8f4" stroke-width="1.200" fill="none"/><circle cx="12" cy="12" r="3" stroke="#8cc8f4" stroke-width="1.200" fill="none"/></svg><svg style="left:8.3px;top:505px" width="16" height="16" viewBox="0 0 16 16"><path d="M6.500 1.500V14.500H1Z" stroke="#e6e6e6" stroke-width="1.100" fill="none"/><path d="M9.500 1.500V14.500H15Z" stroke="#8cc8f4" stroke-width="1.100" fill="none"/></svg><svg style="left:8.3px;top:527px" width="16" height="16" viewBox="0 0 16 16"><path d="M1 16V11" stroke="#e6e6e6" stroke-width="1.200"/><path d="M1 11C1 5 5 1 10 1" stroke="#8cc8f4" stroke-width="1.300" fill="none"/><path d="M10 1H16" stroke="#e6e6e6" stroke-width="1.200"/></svg><svg style="left:8.3px;top:549px" width="16" height="16" viewBox="0 0 16 16"><path d="M8.500 2.500A6 6 0 1 0 14 7" stroke="#e6e6e6" stroke-width="1.400" fill="none"/><path d="M7 0L11 2.500L7.500 5.500Z" fill="#e6e6e6"/></svg><svg style="left:8.3px;top:571px" width="16" height="16" viewBox="0 0 16 16"><rect x="1.500" y="1.500" width="13" height="13" stroke="#e01818" stroke-width="1.300" fill="none"/><text x="8" y="11.500" font-size="9" font-weight="700" fill="#e01818" text-anchor="middle" font-family="Liberation Sans,sans-serif">P</text><circle cx="14.500" cy="1.500" r="1.500" fill="#30e030"/><circle cx="1.500" cy="14.500" r="1.500" fill="#30e030"/></svg><svg style="left:8.3px;top:593px" width="16" height="16" viewBox="0 0 16 16"><rect x="1" y="1.500" width="13" height="13" stroke="#e01818" stroke-width="1.300" fill="none"/><text x="7" y="11.500" font-size="9" font-weight="700" fill="#e01818" text-anchor="middle" font-family="Liberation Sans,sans-serif">P</text><circle cx="14.300" cy="8" r="1.900" fill="#30e030"/></svg><div class="abs" style="left:32.5px;top:207px;width:24px;height:404.500px;border:1px solid #2d3541;border-top:0;background:#3b4453"></div><svg style="left:36.5px;top:210.3px" width="14" height="3" viewBox="0 0 14 3"><g fill="#e0e0e0"><rect x="0.0" y="0.0" width="1" height="1"/><rect x="0.0" y="2.0" width="1" height="1"/><rect x="2.0" y="0.0" width="1" height="1"/><rect x="2.0" y="2.0" width="1" height="1"/><rect x="4.0" y="0.0" width="1" height="1"/><rect x="4.0" y="2.0" width="1" height="1"/><rect x="6.0" y="0.0" width="1" height="1"/><rect x="6.0" y="2.0" width="1" height="1"/><rect x="8.0" y="0.0" width="1" height="1"/><rect x="8.0" y="2.0" width="1" height="1"/><rect x="10.0" y="0.0" width="1" height="1"/><rect x="10.0" y="2.0" width="1" height="1"/><rect x="12.0" y="0.0" width="1" height="1"/><rect x="12.0" y="2.0" width="1" height="1"/></g></svg><svg style="left:35.7px;top:219px" width="16" height="16" viewBox="0 0 16 16"><path d="M1.500 12.500H9.500" stroke="#e6e6e6" stroke-width="1.200" stroke-dasharray="2.500 1.500"/><path d="M11 3C15.500 3 15.500 12 10.500 12" stroke="#e6e6e6" stroke-width="1.200" fill="none"/><rect x="0" y="11.500" width="2.200" height="2.200" fill="#62b8f0"/><rect x="9.500" y="11.300" width="2.200" height="2.200" fill="#62b8f0"/><rect x="9.500" y="2" width="2.200" height="2.200" fill="#62b8f0"/></svg><svg style="left:35.7px;top:241px" width="16" height="16" viewBox="0 0 16 16"><circle cx="8" cy="8" r="7.300" stroke="#e6e6e6" stroke-width="1.100" fill="none"/><path d="M8 5.500V10.500M5.500 8H10.500" stroke="#62b8f0" stroke-width="1.100"/></svg><svg style="left:35.7px;top:263px" width="16" height="16" viewBox="0 0 16 16"><path d="M8 1.500L15 6.500L12.300 14.500H3.700L1 6.500Z" stroke="#e6e6e6" stroke-width="1.200" fill="none"/><rect x="7" y="7" width="2.200" height="2.200" fill="#62b8f0"/><rect x="11.500" y="13.500" width="2.200" height="2.200" fill="#62b8f0"/></svg><svg style="left:35.7px;top:285px" width="16" height="16" viewBox="0 0 16 16"><path d="M0 12H9.500L12 10V14L9.500 16H0Z" fill="#e8e8e8"/><path d="M0 2.500L2.500 0H12V10L9.500 12.500H0Z" fill="#9fd0f6"/><path d="M0 2.500H9.500V12.500H0Z" fill="#8cc6f2"/><path d="M9.500 2.500L12 0V10L9.500 12.500Z" fill="#5fa4dc"/><path d="M14.700 14V2.500M13 4.500L14.700 1.500L16.400 4.500Z" stroke="#fff" stroke-width="1.200" fill="#fff"/></svg><svg style="left:35.7px;top:307px" width="16" height="16" viewBox="0 0 16 16"><path d="M.500 7C.500 12 4 15 7 15C11 15 15.500 13 15.500 8L12 6.500C12 9 4 9 4 6.500Z" fill="#8cc6f2"/><path d="M.500 6.500C2 1.500 14 1.500 15.500 6.500" stroke="#e8e8e8" stroke-width="1.500" fill="none"/><path d="M12.500 9.500L15.500 8V11.500L12.500 13.500Z" fill="#f0f0f0"/></svg><svg style="left:35.7px;top:329px" width="16" height="16" viewBox="0 0 16 16"><path d="M0 5.500L2.500 1.500H8L9.500 4H16V12L13 15H0Z" fill="#8cc6f2"/><path d="M13 7L16 4V12L13 15Z" fill="#5fa4dc"/><rect x="5" y="9" width="6.500" height="7" fill="#e4e4e4"/></svg><svg style="left:35.7px;top:351px" width="16" height="16" viewBox="0 0 16 16"><path d="M.500 1H15.500L10.500 13H5.500Z" fill="#8cc6f2"/><path d="M.500 1L8 7L15.500 1" fill="#6fb2ea"/><circle cx="8" cy="11.700" r="4.200" fill="#c9c9c9"/></svg><svg style="left:35.7px;top:373px" width="16" height="16" viewBox="0 0 16 16"><path d="M1 7L12.500 4.500H16L15 8.500L1 12Z" fill="#b8b8b8"/><path d="M1 7L12.500 4.500H16L4 7.500Z" fill="#d8d8d8"/></svg><svg style="left:35.7px;top:395px" width="16" height="16" viewBox="0 0 16 16"><path d="M1 8.500H9V15H3C1.500 15 1 14 1 13Z" fill="#6fb2ea"/><path d="M5 3L7.500 .500H15.500V9L13 11.500H5Z" fill="#dcdcdc"/><path d="M13 3L15.500 .500V9L13 11.500Z" fill="#a8a8a8"/><path d="M5 3H13V11.500H5Z" fill="#cfcfcf"/></svg><svg style="left:35.7px;top:417px" width="16" height="16" viewBox="0 0 16 16"><path d="M1 8.500L4 6H9V14L6.500 16H1Z" fill="#6fb2ea"/><path d="M6 3L9 .500H16V8L13 11H6Z" fill="#8cc6f2"/><path d="M1 8.500H6.500V16H1Z" fill="#62a8e6"/></svg><svg style="left:35.7px;top:439px" width="16" height="16" viewBox="0 0 16 16"><path d="M1 8L3 6H10V13L8 15H1Z" fill="#d6d6d6"/><path d="M6 3L8 1H15.500V8.500L13.500 10.500H6Z" fill="#e6e6e6"/><path d="M13.500 3L15.500 1V8.500L13.500 10.500Z" fill="#a8a8a8"/><rect x="5.500" y="6.500" width="4.500" height="4.500" fill="#6fb8f4" stroke="#dcdcdc" stroke-width=".800"/></svg><svg style="left:35.7px;top:461px" width="16" height="16" viewBox="0 0 16 16"><path d="M3 .500L10.500 11M12.500 1L6 11" stroke="#4a86e8" stroke-width="1.300"/><circle cx="5" cy="13" r="2" stroke="#4a86e8" stroke-width="1.200" fill="none"/><circle cx="11.500" cy="13" r="2" stroke="#4a86e8" stroke-width="1.200" fill="none"/></svg><svg style="left:35.7px;top:483px" width="16" height="16" viewBox="0 0 16 16"><circle cx="7" cy="10.500" r="5" fill="#e81822"/><path d="M9.500 6L11.500 3.500" stroke="#888" stroke-width="1.500"/><circle cx="12.300" cy="2.700" r="1.800" fill="#f08030"/><circle cx="5.500" cy="9" r="1.200" fill="#ff8088"/></svg><svg style="left:35.7px;top:505px" width="16" height="16" viewBox="0 0 16 16"><rect x="1" y="4.500" width="10.500" height="10.500" fill="#fff" stroke="#000" stroke-width="1.200"/><rect x="7" y="1" width="8" height="8" stroke="#e02020" stroke-width="1.200" stroke-dasharray="2 1.200" fill="none"/></svg><svg style="left:35.7px;top:527px" width="16" height="16" viewBox="0 0 16 16"><path d="M0 6H7" stroke="#e6e6e6" stroke-width="1.200" stroke-dasharray="2 1.200"/><path d="M7 6H12M10 4L12.500 6L10 8" stroke="#e6e6e6" stroke-width="1.200" fill="none"/><path d="M0 10H12" stroke="#62b8f0" stroke-width="1.100" stroke-dasharray="1.500 1.200"/><path d="M14.500 1V15" stroke="#e6e6e6" stroke-width="1.300"/></svg><svg style="left:35.7px;top:549px" width="16" height="16" viewBox="0 0 16 16"><path d="M0 8H6M10.500 8H16" stroke="#8a8f98" stroke-width="1.400" stroke-dasharray="3 1.500"/><path d="M10.500 0L5 16" stroke="#3f8fe0" stroke-width="1.400"/></svg><svg style="left:35.7px;top:571px" width="16" height="16" viewBox="0 0 16 16"><path d="M3 8H11" stroke="#e6e6e6" stroke-width="1.200"/><rect x=".800" y="6.800" width="2.400" height="2.400" stroke="#e6e6e6" stroke-width="1" fill="none"/><rect x="11" y="5.500" width="4.500" height="5" stroke="#f0b080" stroke-width="1.200" fill="none"/></svg><svg style="left:35.7px;top:593px" width="16" height="16" viewBox="0 0 16 16"><rect x="0" y="1.500" width="16" height="13.500" fill="#000"/><rect x="0" y="1.500" width="16" height="4" fill="#dcdcdc"/><path d="M0 9H3V15H0Z" fill="#dcdcdc"/><path d="M1.500 2.800H4.500V4.500H1.500ZM6.500 2.800H9.500V4.500H6.500ZM11.500 2.800H14.500V4.500H11.500Z" fill="#000"/></svg><div class="abs" style="left:60.5px;top:207px;width:24px;height:404.500px;border:1px solid #2d3541;border-top:0;background:#3b4453"></div><svg style="left:64.5px;top:210.3px" width="14" height="3" viewBox="0 0 14 3"><g fill="#e0e0e0"><rect x="0.0" y="0.0" width="1" height="1"/><rect x="0.0" y="2.0" width="1" height="1"/><rect x="2.0" y="0.0" width="1" height="1"/><rect x="2.0" y="2.0" width="1" height="1"/><rect x="4.0" y="0.0" width="1" height="1"/><rect x="4.0" y="2.0" width="1" height="1"/><rect x="6.0" y="0.0" width="1" height="1"/><rect x="6.0" y="2.0" width="1" height="1"/><rect x="8.0" y="0.0" width="1" height="1"/><rect x="8.0" y="2.0" width="1" height="1"/><rect x="10.0" y="0.0" width="1" height="1"/><rect x="10.0" y="2.0" width="1" height="1"/><rect x="12.0" y="0.0" width="1" height="1"/><rect x="12.0" y="2.0" width="1" height="1"/></g></svg><svg style="left:64px;top:219px" width="16" height="16" viewBox="0 0 16 16"><path d="M3 1H14.500V13.500H3ZM8.700 1V13.500M3 7.200H14.500" stroke="#1fb0e6" stroke-width="2" fill="none"/><path d="M1.500 10.500V15H6" stroke="#e03020" stroke-width="1.400" fill="none"/></svg><svg style="left:64px;top:241px" width="16" height="16" viewBox="0 0 16 16"><rect x="3.8" y="-0.2" width="8.4" height="8.0" fill="#000"/><rect x="5.7" y="1.7" width="4.6" height="4.2" fill="#ff1a1a"/><path d="M8 8.300L12 12.300H9.500V16H6.500V12.300H4Z" fill="#000"/></svg><svg style="left:64px;top:263px" width="16" height="16" viewBox="0 0 16 16"><path d="M7.700 8L3.700 4V6.500H0V9.500H3.700V12Z" fill="#000"/><rect x="7.3" y="3.5" width="8.9" height="8.5" fill="#000"/><rect x="9.2" y="5.4" width="5.1" height="4.7" fill="#ff1a1a"/></svg><svg style="left:64px;top:285px" width="16" height="16" viewBox="0 0 16 16"><rect x="-0.2" y="3.5" width="8.9" height="8.5" fill="#000"/><rect x="1.7" y="5.4" width="5.1" height="4.7" fill="#ff1a1a"/><path d="M8.300 8L12.300 4V6.500H16V9.500H12.300V12Z" fill="#000"/></svg><svg style="left:64px;top:307px" width="16" height="16" viewBox="0 0 16 16"><path d="M8 7.700L12 3.700H9.500V0H6.500V3.700H4Z" fill="#000"/><rect x="3.8" y="8.0" width="8.4" height="8.0" fill="#000"/><rect x="5.7" y="9.9" width="4.6" height="4.2" fill="#ff1a1a"/></svg><svg style="left:64px;top:329px" width="16" height="16" viewBox="0 0 16 16"><path d="M5 2L7 0H16V9L14 11H5Z" fill="#fff" stroke="#000" stroke-width="1"/><rect x="5" y="2" width="9" height="9" fill="#0a0af0" stroke="#000" stroke-width="1"/><rect x="-0.4" y="10.5" width="6.0" height="5.6" fill="#000"/><rect x="1.5" y="12.4" width="2.2" height="1.8" fill="#ff1a1a"/></svg><svg style="left:64px;top:351px" width="16" height="16" viewBox="0 0 16 16"><path d="M1.500 5.500L7 1.500L8.500 3V10L3 14.500L1.500 13Z" fill="#fff" stroke="#000" stroke-width="1.100"/><path d="M3 6.500L8.500 3V10L3 14.500Z" fill="#0a0af0" stroke="#000" stroke-width="1"/><rect x="9.3" y="9.5" width="6.6" height="6.2" fill="#000"/><rect x="11.2" y="11.4" width="2.8" height="2.4" fill="#ff1a1a"/></svg><svg style="left:64px;top:373px" width="16" height="16" viewBox="0 0 16 16"><rect x="-0.4" y="-0.2" width="6.6" height="6.2" fill="#000"/><rect x="1.5" y="1.7" width="2.8" height="2.4" fill="#ff1a1a"/><path d="M7 6.500L13.500 2L15 3.500V10.500L8.500 15L7 13.500Z" fill="#fff" stroke="#000" stroke-width="1.100"/><path d="M8.500 8L15 3.500V10.500L8.500 15Z" fill="#0a0af0" stroke="#000" stroke-width="1"/></svg><svg style="left:64px;top:395px" width="16" height="16" viewBox="0 0 16 16"><path d="M1 5L3.500 3L9.500 9.500V15H3L1 13Z" fill="#fff" stroke="#000" stroke-width="1.100"/><path d="M3.500 3L9.500 9.500V15L3.500 8.500Z" fill="#0a0af0" stroke="#000" stroke-width="1"/><rect x="9.8" y="-0.2" width="6.6" height="6.2" fill="#000"/><rect x="11.7" y="1.7" width="2.8" height="2.4" fill="#ff1a1a"/></svg><svg style="left:64px;top:417px" width="16" height="16" viewBox="0 0 16 16"><rect x=".600" y=".600" width="12.500" height="12.500" stroke="#e6e6e6" stroke-width="1.200" fill="none"/><circle cx="10.500" cy="10.500" r="2.800" fill="#3b4453" stroke="#e6e6e6" stroke-width="1.200"/><path d="M12.500 12.500L15.500 15.500" stroke="#d8b070" stroke-width="1.500"/></svg><svg style="left:64px;top:439px" width="16" height="16" viewBox="0 0 16 16"><path d="M.600 0V16M15.400 0V16M.600 3H15.400" stroke="#e6e6e6" stroke-width="1.200"/><path d="M2.800 1.500L.600 3L2.800 4.500M13.200 1.500L15.400 3L13.200 4.500" stroke="#e6e6e6" stroke-width="1" fill="none"/><path d="M9.500 6L6 10.500H8.300L6.500 14.500L11 9.500H8.500L10.500 6Z" fill="#f0c030"/></svg><svg style="left:64px;top:461px" width="16" height="16" viewBox="0 0 16 16"><path d="M1 4V12M15 4V12M1 6.500H15" stroke="#1d6a48" stroke-width="1.400"/><rect x="5" y="3.500" width="6" height="3" fill="#1d6a48"/></svg><svg style="left:64px;top:483px" width="16" height="16" viewBox="0 0 16 16"><ellipse cx="8" cy="8" rx="3.500" ry="7.300" stroke="#e6e6e6" stroke-width="1.100" fill="none"/><ellipse cx="8" cy="8" rx="7.300" ry="3.500" stroke="#e6e6e6" stroke-width="1.100" fill="none"/><path d="M8 5.500V10.500M5.500 8H10.500" stroke="#62b8f0" stroke-width="1.100"/><path d="M2 4L.500 6.500L3.500 6.500Z" fill="#62b8f0"/></svg><svg style="left:64px;top:505px" width="16" height="16" viewBox="0 0 16 16"><defs><radialGradient id="sph" cx=".4" cy=".35" r=".7"><stop offset="0" stop-color="#fff"/><stop offset="1" stop-color="#b0b0b0"/></radialGradient></defs><circle cx="8" cy="7.500" r="6.500" fill="url(#sph)"/><ellipse cx="8" cy="15.300" rx="6" ry=".700" fill="#555c68"/></svg><svg style="left:64px;top:527px" width="16" height="16" viewBox="0 0 16 16"><path d="M1 5L5 1H15V11L11 15H1ZM1 5H11V15M11 5L15 1" stroke="#6cb8f2" stroke-width="1.600" fill="none"/><path d="M6.500 9.500V13M6.500 9.500L9.500 8M6.500 9.500L4 8.500" stroke="#fff" stroke-width="1"/></svg><svg style="left:64px;top:549px" width="16" height="16" viewBox="0 0 16 16"><path d="M0 4.500H5L6.500 2.500H10.500L12 4.500H16V14.500H0Z" fill="#000"/><circle cx="8" cy="9.300" r="3.300" fill="#fff"/><circle cx="8" cy="9.300" r="2.300" fill="#1414a0"/></svg><svg style="left:64px;top:571px" width="16" height="16" viewBox="0 0 16 16"><path d="M0 8.500L8 6L16 8.500V13L8 16L0 13Z" fill="#d2d2d2"/><path d="M0 8.500L8 11.500V16L0 13Z" fill="#b4b4b4"/><path d="M0 8.500L8 6L16 8.500L8 11.500Z" fill="#ececec"/><path d="M4.500 3V8C4.500 10 11.500 10 11.500 8V3Z" fill="#62a8e6"/><ellipse cx="8" cy="3" rx="3.500" ry="1.800" fill="#9fd0f6"/></svg><svg style="left:64px;top:593px" width="16" height="16" viewBox="0 0 16 16"><rect x=".600" y=".600" width="13" height="13" stroke="#e6e6e6" stroke-width="1.200" fill="none"/><circle cx="6" cy="6.500" r="3.500" stroke="#b8bcc4" stroke-width="1.200" fill="none"/><circle cx="8.500" cy="9" r="2.500" fill="#9aa0aa"/><path d="M7 14.500H13C15.500 14.500 15.500 11 13 11H10M11.500 9L9.500 11L11.500 13" stroke="#4aa0e8" stroke-width="1.300" fill="none"/></svg><div class="abs" style="left:88.5px;top:207px;width:24px;height:404.500px;border:1px solid #2d3541;border-top:0;background:#3b4453"></div><svg style="left:92.5px;top:210.3px" width="14" height="3" viewBox="0 0 14 3"><g fill="#e0e0e0"><rect x="0.0" y="0.0" width="1" height="1"/><rect x="0.0" y="2.0" width="1" height="1"/><rect x="2.0" y="0.0" width="1" height="1"/><rect x="2.0" y="2.0" width="1" height="1"/><rect x="4.0" y="0.0" width="1" height="1"/><rect x="4.0" y="2.0" width="1" height="1"/><rect x="6.0" y="0.0" width="1" height="1"/><rect x="6.0" y="2.0" width="1" height="1"/><rect x="8.0" y="0.0" width="1" height="1"/><rect x="8.0" y="2.0" width="1" height="1"/><rect x="10.0" y="0.0" width="1" height="1"/><rect x="10.0" y="2.0" width="1" height="1"/><rect x="12.0" y="0.0" width="1" height="1"/><rect x="12.0" y="2.0" width="1" height="1"/></g></svg><svg style="left:92px;top:219px" width="16" height="16" viewBox="0 0 16 16"><g fill="#1fb0e6"><rect x="1.500" y="0" width="1.200" height="1.200"/><rect x="4.500" y="0" width="1.200" height="1.200"/><rect x="7.500" y="0" width="1.200" height="1.200"/><rect x="10.500" y="0" width="1.200" height="1.200"/><rect x="13.500" y="0" width="1.200" height="1.200"/><rect x="1.500" y="2.800" width="1.200" height="1.200"/><rect x="4.500" y="2.800" width="1.200" height="1.200"/><rect x="7.500" y="2.800" width="1.200" height="1.200"/><rect x="10.500" y="2.800" width="1.200" height="1.200"/><rect x="13.500" y="2.800" width="1.200" height="1.200"/></g><text x="8" y="15.300" font-size="10.500" font-weight="700" fill="#1fb0e6" stroke="#1fb0e6" stroke-width=".600" text-anchor="middle" font-family="Liberation Sans,sans-serif" textLength="16" lengthAdjust="spacingAndGlyphs">100</text></svg><svg style="left:92px;top:241px" width="16" height="16" viewBox="0 0 16 16"><path d="M5.500 1.500L1.500 14H14" stroke="#1fb0e6" stroke-width="1.100" fill="none"/><path d="M5.500 1.500L14 14" stroke="#1fb0e6" stroke-width="1" stroke-dasharray="1.500 1.200"/><path d="M4 8C6 8 8 10 8.500 14" stroke="#1fb0e6" stroke-width="1" fill="none"/><rect x="4.500" y=".300" width="2.200" height="2.200" fill="#ff1a1a"/><rect x="13" y="13" width="2.200" height="2.200" fill="#ff1a1a"/></svg><svg style="left:92px;top:263px" width="16" height="16" viewBox="0 0 16 16"><path d="M4 12L12 4" stroke="#e6e6e6" stroke-width="1.200"/><rect x="0.5" y="11.5" width="4" height="4" stroke="#f0b080" stroke-width="1.100" fill="none"/><rect x="11.5" y="0.5" width="4" height="4" stroke="#f0b080" stroke-width="1.100" fill="none"/></svg><svg style="left:92px;top:285px" width="16" height="16" viewBox="0 0 16 16"><path d="M0 15.500L15.500 0" stroke="#e6e6e6" stroke-width="1.200"/><rect x="6" y="6" width="4" height="4" fill="#3b4453"/><rect x="6.0" y="6.0" width="4" height="4" stroke="#f0b080" stroke-width="1.100" fill="none"/></svg><svg style="left:92px;top:307px" width="16" height="16" viewBox="0 0 16 16"><path d="M.500 .500L15.500 15.500M15.500 .500L.500 15.500" stroke="#e6e6e6" stroke-width="1.200"/><rect x="6" y="6" width="4" height="4" fill="#3b4453"/><rect x="6.0" y="6.0" width="4" height="4" stroke="#f0b080" stroke-width="1.100" fill="none"/></svg><svg style="left:92px;top:329px" width="16" height="16" viewBox="0 0 16 16"><circle cx="8" cy="8" r="7.300" stroke="#e6e6e6" stroke-width="1.100" fill="none"/><rect x="6.2" y="6.2" width="3.6" height="3.6" stroke="#f0b080" stroke-width="1.100" fill="none"/></svg><svg style="left:92px;top:351px" width="16" height="16" viewBox="0 0 16 16"><path d="M8 0V9M0 11H16" stroke="#e6e6e6" stroke-width="1.200"/><rect x="6" y="9" width="4" height="4" fill="#3b4453"/><rect x="6.0" y="9.0" width="4" height="4" stroke="#f0b080" stroke-width="1.100" fill="none"/></svg><svg style="left:92px;top:373px" width="16" height="16" viewBox="0 0 16 16"><circle cx="8" cy="8" r="5.500" stroke="#e6e6e6" stroke-width="1.100" fill="none"/><rect x="6.2" y="0.40000000000000013" width="3.600" height="3.600" fill="#3b4453"/><rect x="6.2" y="0.4" width="3.6" height="3.6" stroke="#f0b080" stroke-width="1.100" fill="none"/><rect x="6.2" y="12.0" width="3.600" height="3.600" fill="#3b4453"/><rect x="6.2" y="12.0" width="3.6" height="3.6" stroke="#f0b080" stroke-width="1.100" fill="none"/><rect x="0.40000000000000013" y="6.2" width="3.600" height="3.600" fill="#3b4453"/><rect x="0.4" y="6.2" width="3.6" height="3.6" stroke="#f0b080" stroke-width="1.100" fill="none"/><rect x="12.0" y="6.2" width="3.600" height="3.600" fill="#3b4453"/><rect x="12.0" y="6.2" width="3.6" height="3.6" stroke="#f0b080" stroke-width="1.100" fill="none"/></svg><svg style="left:92px;top:395px" width="16" height="16" viewBox="0 0 16 16"><rect x="5.8" y="5.8" width="4.5" height="4.5" stroke="#f0b080" stroke-width="1.100" fill="none"/></svg><svg style="left:92px;top:417px" width="16" height="16" viewBox="0 0 16 16"><path d="M.600 0V16M15.400 0V16" stroke="#e6e6e6" stroke-width="1.200"/><path d="M1 5H15M3.500 3.500L1 5L3.500 6.500M12.500 3.500L15 5L12.500 6.500" stroke="#62b8f0" stroke-width="1.100" fill="none"/></svg><svg style="left:92px;top:439px" width="16" height="16" viewBox="0 0 16 16"><path d="M1 0V6M15 0V6M1 3H15M3 1.800L1 3L3 4.200M13 1.800L15 3L13 4.200" stroke="#e6e6e6" stroke-width="1" fill="none"/><rect x=".500" y="8" width="15" height="6.500" fill="#f0c868"/><path d="M3 8V11M5.500 8V10M8 8V11M10.500 8V10M13 8V11" stroke="#7a5a10" stroke-width=".800"/></svg><svg style="left:92px;top:461px" width="16" height="16" viewBox="0 0 16 16"><rect x="2" y="3" width="14" height="11.500" fill="#000"/><rect x="1" y="2" width="13" height="10.500" fill="#fff" stroke="#e01818" stroke-width="1.600"/></svg><svg style="left:92px;top:483px" width="16" height="16" viewBox="0 0 16 16"><path d="M1.500 5L8.500 2L15.500 5V12L8.500 15.500L1.500 12Z" fill="#1d6fe0"/><path d="M1.500 5L8.500 8V15.500L1.500 12Z" fill="#0f56c0"/><path d="M1.500 5L8.500 2L15.500 5L8.500 8Z" fill="#4aa0f4"/><circle cx="1.800" cy="4" r="1.600" fill="#e02020"/></svg><svg style="left:92px;top:505px" width="16" height="16" viewBox="0 0 16 16"><rect x="0" y="1" width="16" height="14.500" fill="#000"/><path d="M0 1.600H16M0 14.900H16M.600 1V15.500M15.400 1V15.500M8 1V15.500M0 8H16" stroke="#dcdcdc" stroke-width="1.200"/><path d="M2 11.500L4 12.500L2 13.500" stroke="#fff" stroke-width=".800" fill="none"/></svg><svg style="left:92px;top:527px" width="16" height="16" viewBox="0 0 16 16"><path d="M4 3H12L15.500 6.500V15.500H4Z" fill="#f2f2f2"/><path d="M12 3V6.500H15.500Z" fill="#aaa"/><path d="M0 3.500H6M4 1L7 3.500L4 6" stroke="#3f9ae8" stroke-width="1.600" fill="none"/><rect x="4" y="9.500" width="11.500" height="5" fill="#9a9a9a"/><text x="9.800" y="14" font-size="4.800" font-weight="700" fill="#fff" text-anchor="middle" font-family="Liberation Sans,sans-serif">WMF</text></svg><svg style="left:92px;top:549px" width="16" height="16" viewBox="0 0 16 16"><rect x="1" y=".500" width="14" height="4.500" fill="#000"/><rect x="1" y="5" width="14" height="10.500" rx="1" fill="#f0a050"/><circle cx="9" cy="10.300" r="3.600" fill="#fff"/><circle cx="9" cy="10.300" r="2" fill="#c8c8c8"/><rect x="2.500" y="6.500" width="2.500" height="1.500" fill="#fff"/><path d="M3 3H13" stroke="#dcdcdc" stroke-width="1" stroke-dasharray="1.500 1"/></svg><svg style="left:92px;top:571px" width="16" height="16" viewBox="0 0 16 16"><rect x="1.500" y="1.500" width="14" height="14" fill="#000"/><rect x=".600" y=".600" width="13.500" height="13.500" fill="#e8f2fa" stroke="#dcdcdc" stroke-width="1"/><path d="M4 3H9L11.500 5.500V12H4Z" fill="#cfe4f6" stroke="#5a9ad0" stroke-width=".900"/></svg><svg style="left:92px;top:593px" width="16" height="16" viewBox="0 0 16 16"><rect x="5" y="0" width="9" height="7" fill="#8a2020" stroke="#c8c8c8" stroke-width=".800"/><rect x="7" y="3" width="8.500" height="6.500" fill="#f4f4f4" stroke="#888" stroke-width=".800"/><rect x="1" y="7.500" width="9" height="6.500" fill="#1d6a30" stroke="#c8c8c8" stroke-width=".800"/><rect x="3" y="10" width="9" height="6" fill="#9a9a9a" stroke="#dcdcdc" stroke-width=".800"/><path d="M13 12L15.500 10.500V13.500Z" fill="#fff"/></svg>
<!-- VIEWPORT -->
<div class="abs" style="left:117px;top:207px;width:1009px;height:493px;background:#000;"></div>
<svg style="left:277px;top:210px" width="688" height="487" viewBox="0 0 688 487"><g shape-rendering="crispEdges" stroke-width="1"><path d="M0 481.5H688M0 476.5H688M0 471.5H688M0 466.5H688M0 457.5H688M0 452.5H688M0 447.5H688M0 442.5H688M0 432.5H688M0 427.5H688M0 422.5H688M0 417.5H688M0 407.5H688M0 403.5H688M0 398.5H688M0 393.5H688M0 383.5H688M0 378.5H688M0 373.5H688M0 368.5H688M0 358.5H688M0 353.5H688M0 349.5H688M0 344.5H688M0 334.5H688M0 329.5H688M0 324.5H688M0 319.5H688M0 309.5H688M0 304.5H688M0 299.5H688M0 295.5H688M0 285.5H688M0 280.5H688M0 275.5H688M0 270.5H688M0 260.5H688M0 255.5H688M0 250.5H688M0 245.5H688M0 236.5H688M0 231.5H688M0 226.5H688M0 221.5H688M0 211.5H688M0 206.5H688M0 201.5H688M0 196.5H688M0 187.5H688M0 182.5H688M0 177.5H688M0 172.5H688M0 162.5H688M0 157.5H688M0 152.5H688M0 147.5H688M0 137.5H688M0 133.5H688M0 128.5H688M0 123.5H688M0 113.5H688M0 108.5H688M0 103.5H688M0 98.5H688M0 88.5H688M0 83.5H688M0 79.5H688M0 74.5H688M0 64.5H688M0 59.5H688M0 54.5H688M0 49.5H688M0 39.5H688M0 34.5H688M0 29.5H688M0 25.5H688M0 15.5H688M0 10.5H688M0 5.5H688" stroke="#3d1617"/><path d="M0 461.5H688M0 437.5H688M0 412.5H688M0 388.5H688M0 363.5H688M0 339.5H688M0 314.5H688M0 290.5H688M0 265.5H688M0 241.5H688M0 216.5H688M0 191.5H688M0 167.5H688M0 142.5H688M0 118.5H688M0 93.5H688M0 69.5H688M0 44.5H688M0 20.5H688" stroke="#744043"/><path d="M0 .5H688" stroke="#74393c"/><path d="M0 486.5H688" stroke="#82292e"/><g style="mix-blend-mode:lighten"><path d="M5.5 0V487M10.5 0V487M15.5 0V487M20.5 0V487M29.5 0V487M34.5 0V487M39.5 0V487M44.5 0V487M54.5 0V487M59.5 0V487M64.5 0V487M69.5 0V487M78.5 0V487M83.5 0V487M88.5 0V487M93.5 0V487M103.5 0V487M108.5 0V487M113.5 0V487M118.5 0V487M128.5 0V487M132.5 0V487M137.5 0V487M142.5 0V487M152.5 0V487M157.5 0V487M162.5 0V487M167.5 0V487M177.5 0V487M182.5 0V487M186.5 0V487M191.5 0V487M201.5 0V487M206.5 0V487M211.5 0V487M216.5 0V487M226.5 0V487M231.5 0V487M236.5 0V487M240.5 0V487M250.5 0V487M255.5 0V487M260.5 0V487M265.5 0V487M275.5 0V487M280.5 0V487M285.5 0V487M290.5 0V487M299.5 0V487M304.5 0V487M309.5 0V487M314.5 0V487M324.5 0V487M329.5 0V487M334.5 0V487M339.5 0V487M348.5 0V487M353.5 0V487M358.5 0V487M363.5 0V487M373.5 0V487M378.5 0V487M383.5 0V487M388.5 0V487M398.5 0V487M402.5 0V487M407.5 0V487M412.5 0V487M422.5 0V487M427.5 0V487M432.5 0V487M437.5 0V487M447.5 0V487M452.5 0V487M456.5 0V487M461.5 0V487M471.5 0V487M476.5 0V487M481.5 0V487M486.5 0V487M496.5 0V487M501.5 0V487M506.5 0V487M510.5 0V487M520.5 0V487M525.5 0V487M530.5 0V487M535.5 0V487M545.5 0V487M550.5 0V487M555.5 0V487M560.5 0V487M569.5 0V487M574.5 0V487M579.5 0V487M584.5 0V487M594.5 0V487M599.5 0V487M604.5 0V487M609.5 0V487M618.5 0V487M623.5 0V487M628.5 0V487M633.5 0V487M643.5 0V487M648.5 0V487M653.5 0V487M658.5 0V487M668.5 0V487M672.5 0V487M677.5 0V487M682.5 0V487" stroke="#174515"/><path d="M24.5 0V487M49.5 0V487M74.5 0V487M98.5 0V487M123.5 0V487M147.5 0V487M172.5 0V487M196.5 0V487M221.5 0V487M245.5 0V487M270.5 0V487M294.5 0V487M319.5 0V487M344.5 0V487M368.5 0V487M393.5 0V487M417.5 0V487M442.5 0V487M466.5 0V487M491.5 0V487M515.5 0V487M540.5 0V487M564.5 0V487M589.5 0V487M614.5 0V487M638.5 0V487M663.5 0V487" stroke="#386d36"/><path d="M.5 0V487" stroke="#2b8823"/><path d="M687.5 0V487" stroke="#387f36"/><path d="M688.5 0V487" stroke="#56565f"/></g></g></svg>
<span class="t" style="left:120.9px;top:213.9px;color:#f4f4f4;letter-spacing:0.63px;-webkit-text-stroke:.3px #f4f4f4;">[−][평면도][2D 와이어프레임]</span>
<div class="abs" style="left:1097px;top:225px;width:29px;height:80px;overflow:hidden"><svg style="left:0px;top:0px" width="29" height="80" viewBox="0 0 29 80"><circle cx="-30.100" cy="39.300" r="37.800" stroke="#292929" stroke-width="9.800" fill="none"/></svg></div><span class="t" style="left:1100.800px;top:257.100px;color:#bdbdbd;font-size:13px">동</span>
<div class="abs" style="left:117px;top:700px;width:1026px;height:17px;background:#f0f0f0;"></div>
<div class="abs" style="left:1126px;top:207px;width:17px;height:493px;background:#f0f0f0;"></div>
<div class="abs" style="left:613.5px;top:708px;width:16px;height:1.5px;background:#5f5f5f;"></div>
<svg style="left:1126px;top:207px" width="17" height="493" viewBox="0 0 17 493"><path d="M5 11.500H13L9 5.900Z" fill="#858585"/><path d="M4.300 482.500H14.100L9.200 488Z" fill="#666"/><rect x="6" y="237.900" width="6" height="17.100" rx="3" fill="#868686"/></svg>
<div class="abs" style="left:117px;top:717px;width:1026px;height:5px;background:#3b4453;"></div>
<!-- COMMAND LINE -->
<div class="abs" style="left:5px;top:720.5px;width:1138px;height:1.5px;background:#2a313c;"></div>
<div class="abs" style="left:5px;top:722px;width:1138px;height:61.5px;background:#3b4453;"></div>
<div class="abs" style="left:29px;top:722px;width:1113px;height:57px;background:#2f3641;"></div>
<div class="abs" style="left:29px;top:722px;width:1113px;height:35.7px;background:#c8c8c8;"></div>
<div class="abs" style="left:29px;top:759.2px;width:1113px;height:19.8px;background:#ffffff;"></div>
<div class="abs" style="left:5px;top:780.3px;width:1138px;height:1.2px;background:#2d3440;"></div>
<svg style="left:8px;top:726.3px" width="18" height="5" viewBox="0 0 18 5"><g fill="#f4f4f4"><rect x="0.0" y="0.0" width="1.300" height="1.400"/><rect x="0.0" y="2.7" width="1.300" height="1.400"/><rect x="2.3" y="0.0" width="1.300" height="1.400"/><rect x="2.3" y="2.7" width="1.300" height="1.400"/><rect x="4.6" y="0.0" width="1.300" height="1.400"/><rect x="4.6" y="2.7" width="1.300" height="1.400"/><rect x="6.9" y="0.0" width="1.300" height="1.400"/><rect x="6.9" y="2.7" width="1.300" height="1.400"/><rect x="9.2" y="0.0" width="1.300" height="1.400"/><rect x="9.2" y="2.7" width="1.300" height="1.400"/><rect x="11.5" y="0.0" width="1.300" height="1.400"/><rect x="11.5" y="2.7" width="1.300" height="1.400"/><rect x="13.8" y="0.0" width="1.300" height="1.400"/><rect x="13.8" y="2.7" width="1.300" height="1.400"/><rect x="16.1" y="0.0" width="1.300" height="1.400"/><rect x="16.1" y="2.7" width="1.300" height="1.400"/></g></svg><svg style="left:11.6px;top:739.8px" width="9" height="9" viewBox="0 0 9 9"><path d="M.700 .700L8.300 8.300M8.300 .700L.700 8.300" stroke="#e2e2e2" stroke-width="2"/></svg><svg style="left:8px;top:761px" width="16" height="16" viewBox="0 0 16 16"><path d="M1.200 14.800L9 7" stroke="#dcdcdc" stroke-width="2.600" stroke-linecap="round"/><path d="M14.800 2.200L11.800 5.200L10 3.400L12.800 .500C10.500 -.300 8 .800 7.600 3.500C7.400 5.500 8.600 7.600 11 7.800C13.500 8 15.600 5.500 14.800 2.200Z" fill="#dcdcdc"/></svg><svg style="left:33px;top:763px" width="16" height="12" viewBox="0 0 16 12"><rect x=".500" y=".500" width="15" height="11" fill="#ececec" stroke="#555" stroke-width="1"/><rect x=".500" y=".500" width="15" height="2.400" fill="#555"/><path d="M2.500 5L5 6.700L2.500 8.400M6 9H9.500" stroke="#333" stroke-width="1"/></svg><svg style="left:51.6px;top:767.2px" width="8" height="4" viewBox="0 0 8 4"><path d="M0 0H7.200L3.600 4Z" fill="#6a6a6a"/></svg>
<span class="t" style="left:32.0px;top:725.5px;font-size:13px;color:#111;font-family:'Liberation Mono','Noto Sans CJK KR',monospace;letter-spacing:1.04px;">명령</span>
<span class="t" style="left:58.0px;top:725.5px;font-size:13px;color:#111;font-family:'Liberation Mono','Noto Sans CJK KR',monospace;letter-spacing:-1.31px;">:</span>
<span class="t" style="left:71.0px;top:726.0px;font-size:13px;color:#111;font-family:'Liberation Mono','Noto Sans CJK KR',monospace;letter-spacing:-1.31px;">*</span>
<span class="t" style="left:77.8px;top:725.5px;font-size:13px;color:#111;font-family:'Liberation Mono','Noto Sans CJK KR',monospace;letter-spacing:1.04px;">취소</span>
<span class="t" style="left:103.9px;top:726.0px;font-size:13px;color:#111;font-family:'Liberation Mono','Noto Sans CJK KR',monospace;letter-spacing:-1.31px;">*</span>
<span class="t" style="left:32.0px;top:741.0px;font-size:13px;color:#111;font-family:'Liberation Mono','Noto Sans CJK KR',monospace;letter-spacing:1.04px;">명령</span>
<span class="t" style="left:58.0px;top:741.0px;font-size:13px;color:#111;font-family:'Liberation Mono','Noto Sans CJK KR',monospace;letter-spacing:-1.31px;">:</span>
<span class="t" style="left:71.0px;top:741.5px;font-size:13px;color:#111;font-family:'Liberation Mono','Noto Sans CJK KR',monospace;letter-spacing:-1.31px;">*</span>
<span class="t" style="left:77.8px;top:741.0px;font-size:13px;color:#111;font-family:'Liberation Mono','Noto Sans CJK KR',monospace;letter-spacing:1.04px;">취소</span>
<span class="t" style="left:103.9px;top:741.5px;font-size:13px;color:#111;font-family:'Liberation Mono','Noto Sans CJK KR',monospace;letter-spacing:-1.31px;">*</span>
<span class="t" style="left:67.2px;top:760.6px;font-size:13px;color:#8e8e8e;font-style:italic;font-family:'Liberation Mono','Noto Sans CJK KR',monospace;letter-spacing:1.04px;">명령</span>
<span class="t" style="left:99.7px;top:760.6px;font-size:13px;color:#8e8e8e;font-style:italic;font-family:'Liberation Mono','Noto Sans CJK KR',monospace;letter-spacing:1.04px;">입력</span>
<!-- STATUS BAR -->
<svg style="left:0px;top:783px" width="260" height="26" viewBox="0 0 260 26"><path d="M45.500 25L54.500 .500H103.500L94.500 25Z" fill="#3b4453"/><g stroke="#4a5362" stroke-width="1.200"><path d="M150 20L156.500 5M205 20L211.500 5M246 20L252.500 5"/></g><g stroke="#e8e8e8" stroke-width="2"><path d="M20 7.500H36M20 13.500H36M20 19.500H36"/><path d="M229.200 6V20.500M222 13.200H236.500" stroke-width="2.200"/></g></svg><div class="abs" style="left:542px;top:786px;width:27.5px;height:24px;background:#353d4a;"></div><div class="abs" style="left:571.7px;top:786px;width:64.8px;height:24px;background:#3b4453;"></div><div class="abs" style="left:639px;top:786px;width:103.6px;height:24px;background:#3b4453;"></div><div class="abs" style="left:744.6px;top:786px;width:63.7px;height:24px;background:#3b4453;"></div><div class="abs" style="left:811.3px;top:786px;width:106.0px;height:24px;background:#3b4453;"></div><div class="abs" style="left:920px;top:786px;width:83px;height:24px;background:#3b4453;"></div><div class="abs" style="left:1004.5px;top:786px;width:23.5px;height:24px;background:#3b4453;"></div><div class="abs" style="left:1031.3px;top:786px;width:23.7px;height:24px;background:#3b4453;"></div><div class="abs" style="left:1058.2px;top:786px;width:29.8px;height:24px;background:#3b4453;"></div><div class="abs" style="left:1091.4px;top:786px;width:23.8px;height:24px;background:#3b4453;"></div><div class="abs" style="left:1117.3px;top:786px;width:24.0px;height:24px;background:#3b4453;"></div><div class="abs" style="left:573px;top:787px;width:21.8px;height:22px;background:#5a8ac1;"></div><div class="abs" style="left:597px;top:787px;width:21.8px;height:22px;background:#5a8ac1;"></div><div class="abs" style="left:640px;top:787px;width:22px;height:22px;background:#5a8ac1;"></div><div class="abs" style="left:745.2px;top:787px;width:21.8px;height:22px;background:#5a8ac1;"></div><div class="abs" style="left:812px;top:787px;width:22px;height:22px;background:#5a8ac1;"></div><svg style="left:623.7px;top:796px" width="9" height="4.5" viewBox="0 0 9 4.5"><path d="M0 0H8.400L4.200 4.400Z" fill="#d6d6d6"/></svg><svg style="left:690.8px;top:796px" width="9" height="4.5" viewBox="0 0 9 4.5"><path d="M0 0H8.400L4.200 4.400Z" fill="#d6d6d6"/></svg><svg style="left:731.5px;top:796px" width="9" height="4.5" viewBox="0 0 9 4.5"><path d="M0 0H8.400L4.200 4.400Z" fill="#d6d6d6"/></svg><svg style="left:796px;top:796px" width="9" height="4.5" viewBox="0 0 9 4.5"><path d="M0 0H8.400L4.200 4.400Z" fill="#d6d6d6"/></svg><svg style="left:905px;top:796px" width="9" height="4.5" viewBox="0 0 9 4.5"><path d="M0 0H8.400L4.200 4.400Z" fill="#d6d6d6"/></svg><svg style="left:991.3px;top:796px" width="9" height="4.5" viewBox="0 0 9 4.5"><path d="M0 0H8.400L4.200 4.400Z" fill="#d6d6d6"/></svg><svg style="left:576px;top:790px" width="16" height="16" viewBox="0 0 16 16"><path d="M4.500 0V16M8.200 0V16M12 0V16M0 4.300H16M0 8H16M0 11.800H16" stroke="#fff" stroke-width="1.300"/></svg><svg style="left:601.5px;top:791.5px" width="14" height="14" viewBox="0 0 14 14"><g fill="#fff"><rect x="1.5" y="1.3" width="2" height="2"/><rect x="1.5" y="5.9" width="2" height="2"/><rect x="1.5" y="10.5" width="2" height="2"/><rect x="6.1" y="1.3" width="2" height="2"/><rect x="6.1" y="5.9" width="2" height="2"/><rect x="6.1" y="10.5" width="2" height="2"/><rect x="10.7" y="1.3" width="2" height="2"/><rect x="10.7" y="5.9" width="2" height="2"/><rect x="10.7" y="10.5" width="2" height="2"/></g></svg><svg style="left:643px;top:790px" width="17" height="17" viewBox="0 0 17 17"><path d="M1 0V15.300H16.500" stroke="#fff" stroke-width="1.600"/><path d="M1.500 10.500H6V15" stroke="#fff" stroke-width="1.200"/></svg><svg style="left:666px;top:789.5px" width="18" height="18" viewBox="0 0 18 18"><circle cx="7.800" cy="9" r="6.300" stroke="#ececec" stroke-width="1.300"/><path d="M7.800 9H16.500M7.800 9L15 2" stroke="#ececec" stroke-width="1.300"/></svg><svg style="left:706px;top:789px" width="18" height="18" viewBox="0 0 18 18"><path d="M9 1V17" stroke="#3fd25a" stroke-width="1.300"/><path d="M2.500 2.500L15.500 15.500" stroke="#e8453c" stroke-width="1.300"/><rect x="7.600" y="7.600" width="2.800" height="2.800" fill="#fff" stroke="#333" stroke-width=".600"/></svg><svg style="left:747.5px;top:790px" width="18" height="16" viewBox="0 0 18 16"><path d="M1.500 14.500H17M1.500 14.500L13.500 1.500" stroke="#fff" stroke-width="1.500"/><rect x="5.700" y="7" width="2.800" height="2.800" fill="#fff"/></svg><svg style="left:771.5px;top:790px" width="17" height="17" viewBox="0 0 17 17"><rect x="2.500" y="2.800" width="13.500" height="13" stroke="#ececec" stroke-width="1.300"/><rect x=".600" y=".600" width="4" height="4" fill="#3b4453" stroke="#f0a070" stroke-width="1.200"/></svg><svg style="left:814px;top:789.5px" width="17" height="17" viewBox="0 0 17 17"><path d="M7.900 .600L10 7.400L9.700 9.300L12.600 11L14.900 16.400L7.900 12.300L.900 16.400L3.200 11L6.100 9.300L5.800 7.400Z" fill="#fff"/><circle cx="13.900" cy="4.600" r="2.500" stroke="#fff" stroke-width="1.200"/></svg><svg style="left:838.5px;top:789.5px" width="17" height="17" viewBox="0 0 17 17"><path d="M7.900 .600L10 7.400L9.700 9.300L12.600 11L14.900 16.400L7.900 12.300L.900 16.400L3.200 11L6.100 9.300L5.800 7.400Z" fill="#d9d9d9"/><path d="M14.200 .300L11 4.300H13.200L11.800 7.800L15.800 3.200H13.700L15.200 .300Z" fill="#d9d9d9"/></svg><svg style="left:863.3px;top:789.5px" width="17" height="17" viewBox="0 0 17 17"><path d="M7.900 .600L10 7.400L9.700 9.300L12.600 11L14.900 16.400L7.900 12.300L.900 16.400L3.200 11L6.100 9.300L5.800 7.400Z" fill="#d9d9d9"/></svg><svg style="left:924px;top:790px" width="16" height="16" viewBox="0 0 16 16"><g transform="translate(7.700 7.800)" fill="#ececec"><rect x="-1.700" y="-7.700" width="3.400" height="4" transform="rotate(0)"/><rect x="-1.700" y="-7.700" width="3.400" height="4" transform="rotate(45)"/><rect x="-1.700" y="-7.700" width="3.400" height="4" transform="rotate(90)"/><rect x="-1.700" y="-7.700" width="3.400" height="4" transform="rotate(135)"/><rect x="-1.700" y="-7.700" width="3.400" height="4" transform="rotate(180)"/><rect x="-1.700" y="-7.700" width="3.400" height="4" transform="rotate(225)"/><rect x="-1.700" y="-7.700" width="3.400" height="4" transform="rotate(270)"/><rect x="-1.700" y="-7.700" width="3.400" height="4" transform="rotate(315)"/></g><circle cx="7.700" cy="7.800" r="4.200" stroke="#ececec" stroke-width="3"/></svg><svg style="left:1007.5px;top:789.5px" width="17" height="17" viewBox="0 0 17 17"><path d="M8.300 0V16.500M0 8.200H16.500" stroke="#ececec" stroke-width="1.800"/></svg><svg style="left:1035px;top:790.5px" width="17" height="16" viewBox="0 0 17 16"><rect x=".600" y=".600" width="5.600" height="5.600" stroke="#ececec" stroke-width="1.100"/><circle cx="12.800" cy="5.300" r="3" stroke="#ececec" stroke-width="1.100"/><path d="M6.700 8.500L10 14.500H3.400Z" stroke="#ececec" stroke-width="1.100"/></svg><svg style="left:1064.5px;top:790px" width="18" height="17" viewBox="0 0 18 17"><rect x="0" y="0" width="15.300" height="11.300" fill="#cfd2d6"/><path d="M1 9L4.500 3L8 8.500L11 4L14.500 9" stroke="#4a5a70" stroke-width="1"/><circle cx="4.500" cy="3" r="1" fill="#3d9be0"/><path d="M12 8L16.300 16H7.700Z" fill="#f0a070"/><path d="M12 11V13.500" stroke="#fff" stroke-width="1"/></svg><svg style="left:1095px;top:792.5px" width="16" height="12" viewBox="0 0 16 12"><rect x=".600" y=".600" width="14.800" height="10.500" stroke="#ececec" stroke-width="1.200"/><path d="M8.500 5L12.500 2.500M12.500 2.500H10M12.500 2.500V4.800M7 6.500L3.200 9M3.200 9H5.700M3.200 9V6.700" stroke="#ececec" stroke-width="1.100"/></svg><svg style="left:1121px;top:791px" width="17" height="14" viewBox="0 0 17 14"><path d="M0 1H16.500M0 7H16.500M0 13H16.500" stroke="#ececec" stroke-width="2"/></svg>
<span class="t" style="left:62.7px;top:789.0px;color:#ffffff;letter-spacing:0.35px;">모형</span>
<span class="t" style="left:110.5px;top:789.0px;color:#d6d9de;letter-spacing:0.18px;">배치1</span>
<span class="t" style="left:165.6px;top:789.0px;color:#d6d9de;letter-spacing:0.34px;">배치2</span>
<span class="t" style="left:546.0px;top:790.0px;color:#f2f2f2;letter-spacing:-0.05px;">모형</span>
<span class="t" style="left:887.8px;top:790.0px;font-size:13px;color:#f2f2f2;transform:scaleX(0.686);transform-origin:0 50%;">1:1</span>
<span class="t" style="left:949.5px;top:790.0px;font-size:13px;color:#f2f2f2;transform:scaleX(0.815);transform-origin:0 50%;">CYCAD</span>
<!-- FLYOUT -->
<div class="abs" style="left:858px;top:175px;width:239px;height:197.5px;background:#3b4453;border-left:1px solid #2a313c;border-right:2px solid #2a313c;border-bottom:1px solid #2a313c"></div><div class="abs" style="left:947px;top:180px;width:1px;height:71px;background:#2a313c;"></div><div class="abs" style="left:788px;top:250.7px;width:240px;height:2.4px;background:#0b8b8e;"></div><div class="abs" style="left:1025.2px;top:236.5px;width:2.6px;height:16.5px;background:#0b8b8e;"></div><svg style="left:870.5px;top:183px" width="24" height="32" viewBox="0 0 24 32"><defs><linearGradient id="pg870" x1="0" x2="1" y1="0" y2="0"><stop offset="0" stop-color="#bdbdbd"/><stop offset=".35" stop-color="#ececec"/><stop offset="1" stop-color="#d4d4d4"/></linearGradient></defs><path d="M0 1L5 0L23.500 2.200V31.500L15.500 30.500V8H8V31.800L0 31Z" fill="url(#pg870)"/><path d="M15.500 8L17.300 8.800V30.700L15.500 30.500Z" fill="#8f8f8f"/><path d="M8 8H15.500L17.300 8.800H9.500Z" fill="#a8a8a8"/><rect x="1.200" y="30" width="2.200" height="2" fill="#ff1010"/></svg><svg style="left:910.7px;top:183px" width="24" height="32" viewBox="0 0 24 32"><defs><linearGradient id="pg910" x1="0" x2="1" y1="0" y2="0"><stop offset="0" stop-color="#bdbdbd"/><stop offset=".35" stop-color="#ececec"/><stop offset="1" stop-color="#d4d4d4"/></linearGradient></defs><path d="M0 1L5 0L23.500 2.200V31.500L15.500 30.500V8H8V31.800L0 31Z" fill="url(#pg910)"/><path d="M15.500 8L17.300 8.800V30.700L15.500 30.500Z" fill="#8f8f8f"/><path d="M8 8H15.500L17.300 8.800H9.500Z" fill="#a8a8a8"/><rect x="1.200" y="30" width="2.200" height="2" fill="#ff1010"/></svg><svg style="left:964px;top:186.3px" width="33" height="26" viewBox="0 0 33 26"><path d="M0 5.600L16.200 .300L32.500 4L15 8Z" fill="#e6e6e6"/><path d="M0 5.600L15 8V9.600L0 7.200Z" fill="#bcbcbc"/><path d="M15 8L32.500 4V5.600L15 9.600Z" fill="#cfcfcf"/><path d="M1 7.300L3.300 7.700V20L1 19.300Z" fill="#d9d9d9"/><path d="M14.200 9.500L16.800 9.200V25.500L14.200 24.800Z" fill="#ededed"/><path d="M28.300 6.500L31.500 5.800V19L28.300 18.300Z" fill="#d9d9d9"/><path d="M24 7.500L25.800 7.100V13L24 12.600Z" fill="#a9a9a9"/></svg><svg style="left:1011.5px;top:186px" width="33" height="26" viewBox="0 0 33 26"><path d="M.500 5.700L16.200 .800L32 4.300L15.300 8.300Z" stroke="#dedede" stroke-width="1.700" fill="none"/><path d="M16.200 .800L15.800 8M7 3.500L24 6.500" stroke="#c9c9c9" stroke-width="1"/><path d="M0 6L2.400 6.500V20L0 19.300Z" fill="#d9d9d9"/><path d="M14 8.500L16.700 8.200V25.800L14 25Z" fill="#ededed"/><path d="M29.300 5.500L32.300 4.800V19L29.300 18.300Z" fill="#d9d9d9"/><path d="M15.400 2L17 1.800V7L15.400 7.200Z" fill="#bdbdbd"/></svg><svg style="left:875.2px;top:259.4px" width="15" height="32" viewBox="0 0 15 32"><defs><linearGradient id="cg1" x1="0" x2="1" y1="0" y2="0"><stop offset="0" stop-color="#6f6f6f"/><stop offset=".6" stop-color="#dcdcdc"/><stop offset="1" stop-color="#b5b5b5"/></linearGradient></defs><path d="M.300 6V25L7.500 31.300C11 31 13.500 29 14.500 26.500V8.500Z" fill="url(#cg1)"/><path d="M.300 6L8.500 0L14.500 8.500C13 11 10 12.500 7.500 12.500Z" fill="#f2f2f2"/></svg><svg style="left:917.6px;top:259.4px" width="12" height="32" viewBox="0 0 12 32"><defs><linearGradient id="cg2" x1="0" x2="1" y1="0" y2="0"><stop offset="0" stop-color="#8a8a8a"/><stop offset=".6" stop-color="#e3e3e3"/><stop offset="1" stop-color="#bdbdbd"/></linearGradient></defs><path d="M.300 6.500C.300 4 5 1.500 11.300 0V27.500C8 30.500 3 31.500 .500 28Z" fill="url(#cg2)"/><path d="M9.300 .500L11.300 0V27.500L9.300 29Z" fill="#a9a9a9"/></svg><svg style="left:954.3px;top:259.8px" width="13" height="31" viewBox="0 0 13 31"><path d="M0 5L6.500 10V31L0 24.500Z" fill="#5f5f5f"/><path d="M6.500 10L12.500 6.500V26.500L6.500 31Z" fill="#d4d4d4"/><path d="M0 5L6 0L12.500 6.500L6.500 10Z" fill="#f3f3f3"/></svg><svg style="left:993.6px;top:259.2px" width="12" height="32" viewBox="0 0 12 32"><defs><linearGradient id="cg4" x1="0" x2="1" y1="0" y2="0"><stop offset="0" stop-color="#7d7d7d"/><stop offset=".6" stop-color="#e0e0e0"/><stop offset="1" stop-color="#a8a8a8"/></linearGradient></defs><path d="M0 5V27C0 30 2.500 31.500 5.700 31.500S11.400 30 11.400 27V5Z" fill="url(#cg4)"/><ellipse cx="5.700" cy="5" rx="5.700" ry="5" fill="#f4f4f4"/></svg><svg style="left:1032.1px;top:259.5px" width="10" height="31" viewBox="0 0 10 31"><path d="M0 6L9.800 11V30.500L.500 27.500Z" fill="#8a8a8a"/><path d="M0 6L6.500 0L9.800 11Z" fill="#f0f0f0"/></svg><svg style="left:1069.3px;top:259.2px" width="11" height="31" viewBox="0 0 11 31"><defs><linearGradient id="cg6" x1="0" x2="1" y1="0" y2="0"><stop offset="0" stop-color="#6a6a6a"/><stop offset=".6" stop-color="#dedede"/><stop offset="1" stop-color="#b0b0b0"/></linearGradient></defs><path d="M0 4.500V26.500L3.500 30.500L8 30L11 26V5Z" fill="url(#cg6)"/><path d="M0 4.500L2.500 .700L7.500 0L11 3.500L9 8L3.500 9Z" fill="#f4f4f4"/></svg><svg style="left:866px;top:335px" width="13" height="13" viewBox="0 0 13 13"><circle cx="6.500" cy="6.500" r="6.500" fill="#000"/><path d="M4.200 2.300L10.200 6.500L4.200 10.700Z" fill="#fff"/></svg><div class="abs" style="left:860px;top:354px;width:16px;height:17.500px;background:#4d6788;border:1px solid #72b5ee"></div><svg style="left:862.5px;top:357px" width="11" height="11" viewBox="0 0 11 11"><circle cx="6.500" cy="4.300" r="3.500" fill="#e4e4e4"/><circle cx="4.200" cy="6.500" r="3.700" fill="#cfd3d8"/></svg>
<span class="t" style="left:865.8px;top:217.6px;letter-spacing:0.36px;">중간점</span>
<span class="t" style="left:911.8px;top:217.6px;letter-spacing:-0.15px;">끝점</span>
<span class="t" style="left:957.0px;top:217.6px;letter-spacing:0.46px;">기둥상판</span>
<span class="t" style="left:1011.0px;top:217.6px;letter-spacing:0.49px;">기둥보</span>
<span class="t" style="left:866.0px;top:293.8px;letter-spacing:0.29px;">둥근면</span>
<span class="t" style="left:912.0px;top:293.8px;letter-spacing:-0.05px;">반원</span>
<span class="t" style="left:950.0px;top:293.8px;letter-spacing:-0.05px;">사각</span>
<span class="t" style="left:988.0px;top:293.8px;letter-spacing:-0.05px;">원통</span>
<span class="t" style="left:1025.0px;top:293.8px;letter-spacing:0.45px;">쐐기</span>
<span class="t" style="left:1064.0px;top:293.8px;letter-spacing:-0.05px;">다각</span>
<span class="t" style="left:886.5px;top:334.4px;letter-spacing:0.39px;">설명_기둥그리기</span>
<span class="t" style="left:952.8px;top:354.6px;letter-spacing:0.54px;">기둥과 보</span>
<!-- DIALOG -->
<div class="abs" style="left:322px;top:220px;width:461.500px;height:281px;background:#f0f0f0;border-radius:8px;overflow:hidden;box-shadow:0 0 0 .5px #5a5a5a"><div class="abs" style="left:0;top:0;width:100%;height:30.500px;background:#4b4a49"></div></div><svg style="left:762.5px;top:229.5px" width="11" height="11" viewBox="0 0 11 11"><path d="M.400 .400L10.400 10.400M10.400 .400L.400 10.400" stroke="#f2f2f2" stroke-width="1.100"/></svg><div class="abs" style="left:331px;top:254px;width:281px;height:240px;background:#000;"></div><svg style="left:330px;top:253px" width="282" height="241" viewBox="0 0 282 241"><g stroke-width="1" fill="none"><path d="M136.5 13.1L44.5 66.3L136.5 118.6L229.5 66.3L136.5 13.1M136.5 23.9L61.8 66.6L136.5 109.0L210.5 66.6L136.5 23.9M71.4 71.2L136.5 34.9L201.3 71.2M127.5 40.1L127.5 103.4M136.5 23.9L136.5 109.0M145.5 40.1L145.5 103.4M44.5 66.3L44.5 78.1L136.5 129.1L229.5 78.1L229.5 66.3M136.5 118.6L136.5 129.1M127.5 124.5L127.5 207.4L136.5 211.8L145.5 207.4L145.5 124.5M136.5 129.1L136.5 211.8M44.5 78.1L44.5 159.3L53.5 164.0L62.5 159.3L62.5 88.1M53.5 82.8L53.5 164.0M229.5 78.1L229.5 159.3L220.5 164.0L210.5 159.3L210.5 88.1M220.5 82.8L220.5 164.0" stroke="#fff"/><path d="M22.1 172.6L116.1 224.7M44.5 159.3L19.2 173.5M136.5 211.7L112.2 226.7M158.4 224.0L250.7 172.0M229.5 159.3L253.7 173.5M136.5 211.7L161.9 226.7M145.3 207.7L158.8 214.7M157.1 213.6L143.2 220.6M239.5 53.7L239.5 70.8M229.5 66.4L253.7 52.5M229.5 77.3L243.4 69.9M250.5 53.7L250.5 146.6M229.5 159.3L253.7 145.1" stroke="#00e2e2"/></g><g font-family="Liberation Sans,sans-serif" font-size="11" font-weight="700" fill="#fff" text-anchor="middle"><rect x="235.0" y="44.6" width="9" height="10" fill="#000"/><text x="239.5" y="53.5">D</text><rect x="245.1" y="100.6" width="9" height="10" fill="#000"/><text x="249.6" y="109.5">E</text><rect x="63.3" y="191.2" width="9" height="10" fill="#000"/><text x="67.8" y="200.1">B</text><rect x="199.9" y="191.8" width="9" height="10" fill="#000"/><text x="204.4" y="200.7">A</text><rect x="134.1" y="216.2" width="9" height="10" fill="#000"/><text x="138.6" y="225.1">C</text></g></svg><div class="abs" style="left:619px;top:260.500px;width:157.500px;height:86px;border:1px solid #dcdcdc"></div><svg style="left:628px;top:276.5px" width="14" height="14" viewBox="0 0 14 14"><circle cx="6.800" cy="6.800" r="5" stroke="#0a5fc0" stroke-width="3.400" fill="#fff"/></svg><svg style="left:702px;top:276.5px" width="14" height="14" viewBox="0 0 14 14"><circle cx="6.800" cy="6.800" r="6" stroke="#6e6e6e" stroke-width="1" fill="#fff"/></svg><div class="abs" style="left:708px;top:302px;width:60px;height:18px;background:#fff;border:1px solid #7a7a7a"></div><div class="abs" style="left:708px;top:327px;width:60px;height:18px;background:#fff;border:1px solid #7a7a7a"></div><div class="abs" style="left:688px;top:356.5px;width:89px;height:17px;background:#fff;border:1px solid #7a7a7a"></div><div class="abs" style="left:687px;top:380.5px;width:90px;height:17px;background:#fff;border:1px solid #7a7a7a"></div><div class="abs" style="left:699px;top:404.5px;width:78px;height:17px;background:#fff;border:1px solid #7a7a7a"></div><div class="abs" style="left:695px;top:428.5px;width:82px;height:17px;background:#fff;border:1px solid #7a7a7a"></div><div class="abs" style="left:667px;top:473px;width:62px;height:18.500px;background:#fdfdfd;border:1.200px solid #0a78d7;border-radius:4px"></div>
<span class="t" style="left:332.8px;top:227.9px;color:#f2f2f2;letter-spacing:0.56px;">사각 기둥과 보</span>
<span class="t" style="left:628.0px;top:252.3px;color:#000;letter-spacing:0.86px;background:#f0f0f0;padding:0 2px;margin-left:-2px;">길이 입력:</span>
<span class="t" style="left:644.4px;top:275.9px;color:#000;letter-spacing:0.66px;">마우스</span>
<span class="t" style="left:718.5px;top:275.9px;color:#000;letter-spacing:0.46px;">키보드</span>
<span class="t" style="left:628.6px;top:302.6px;color:#000;letter-spacing:0.65px;">A: 가로 길이:</span>
<span class="t" style="left:628.6px;top:327.3px;color:#000;letter-spacing:0.65px;">B: 세로 길이:</span>
<span class="t" style="left:619.0px;top:357.2px;color:#000;letter-spacing:0.7px;">C: 기둥 폭:</span>
<span class="t" style="left:619.0px;top:381.0px;color:#000;letter-spacing:0.57px;">D: 보 높이:</span>
<span class="t" style="left:619.0px;top:404.6px;color:#000;letter-spacing:0.7px;">E: 전체 높이:</span>
<span class="t" style="left:619.0px;top:428.9px;color:#000;letter-spacing:0.85px;">그려질 높이:</span>
<span class="t" style="left:619.0px;top:449.6px;font-size:12.5px;color:#000;transform:scaleX(0.987);transform-origin:0 50%;">CYCAD FANTASMO</span>
<span class="t" style="left:686.0px;top:474.9px;color:#000;letter-spacing:0.45px;">확인</span>
<div class="abs" style="left:710px;top:303.7px;width:24.3px;height:11.6px;background:#0a64d2;"></div>
<span class="t" style="left:710.2px;top:302.5px;color:#fff;letter-spacing:-0.73px;transform:scaleY(1.26);transform-origin:0 50%;">3000</span>
<div class="abs" style="left:733.8px;top:303.7px;width:1px;height:11.6px;background:#ff8c1a;"></div>
<span class="t" style="left:710.2px;top:327.1px;color:#000;letter-spacing:-0.73px;transform:scaleY(1.26);transform-origin:0 50%;">3000</span>
<span class="t" style="left:690.4px;top:356.3px;color:#000;letter-spacing:-0.68px;transform:scaleY(1.26);transform-origin:0 50%;">300</span>
<span class="t" style="left:689.4px;top:380.1px;color:#000;letter-spacing:-0.68px;transform:scaleY(1.26);transform-origin:0 50%;">300</span>
<span class="t" style="left:701.3px;top:404.1px;color:#000;letter-spacing:-0.68px;transform:scaleY(1.26);transform-origin:0 50%;">2600</span>
<span class="t" style="left:697.2px;top:428.1px;color:#000;letter-spacing:-0.69px;transform:scaleY(1.26);transform-origin:0 50%;">0</span>
<div id="frame"></div>
</div>
</body>
</html>
